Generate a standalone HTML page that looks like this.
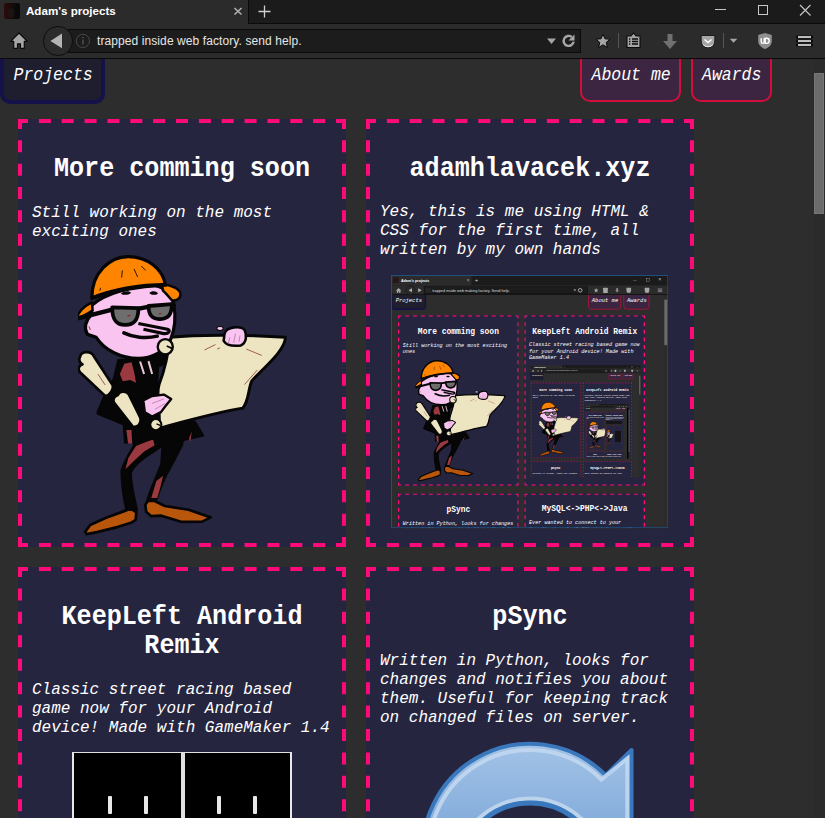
<!DOCTYPE html>
<html><head><meta charset="utf-8"><title>Adam's projects</title><style>
*{box-sizing:border-box}
html,body{margin:0;padding:0}
body{width:825px;height:818px;overflow:hidden;position:relative;background:#2d2d2d;font-family:"Liberation Sans",sans-serif}
.abs{position:absolute}
.tabstrip{position:absolute;left:0;top:0;width:825px;height:24px;background:#1b1b1b;border-bottom:1px solid #0a0a0a}
.seltab{position:absolute;left:0;top:0;width:249px;height:29px;background:#2b2b2b;border-right:1px solid #0a0a0a}
.toolbar{position:absolute;left:0;top:24px;width:825px;height:35px;background:#2b2b2b;border-bottom:1px solid #0a0a0a}
.page{position:absolute;left:0;top:58px;width:813px;height:760px;overflow:hidden;background:#2d2d2d}
.card{position:absolute;background:#262540}
.card .db{position:absolute;left:0;top:0}
.h2{position:absolute;left:0;width:100%;text-align:center;font-family:"Liberation Mono",monospace;font-weight:bold;font-size:25.1px;line-height:29px;color:#fff;white-space:pre;transform:scaleY(1.075);transform-origin:50% 21.2px}
.p{position:absolute;font-family:"Liberation Mono",monospace;font-style:italic;font-size:16px;line-height:19px;color:#fff;white-space:pre;transform:scaleY(1.06);transform-origin:0 13.76px}
.btn{position:absolute;font-family:"Liberation Mono",monospace;font-style:italic;font-size:16.5px;line-height:19px;color:#fff;white-space:pre;transform:scaleY(1.08);transform-origin:0 13.9px}

.win{position:absolute;transform-origin:0 0;overflow:hidden;background:#2d2d2d}
.win .abs{position:absolute}
.win .h2{font-size:23.9px}
.win .p{font-size:15.4px}
</style></head>
<body><svg width="0" height="0" style="position:absolute"><defs><g id="cartoon"><g transform="translate(80 430) scale(0.169693)"><path d="M300 40 L480 40 L480 95 L430 130 C380 160 320 200 300 250 C295 300 315 380 335 470 L275 480 C262 420 245 320 245 240 C255 200 270 170 320 90 Z" fill="#060606" stroke="#060606" stroke-width="14" stroke-linejoin="round"/><path d="M490 40 L610 40 L600 90 C570 150 540 210 510 260 C480 320 460 380 450 410 L395 420 C410 360 450 280 480 200 Z" fill="#060606" stroke="#060606" stroke-width="14" stroke-linejoin="round"/><path d="M330 95 L430 55 L440 90 L380 125 L320 180 L268 232 L285 165 Z" fill="#9a3a40"/><path d="M420 400 L450 300 L490 270 L470 350 L455 400 Z" fill="#9a3a40"/><path d="M30 600 L60 560 L150 518 L260 478 L300 463 L332 485 L328 530 L300 547 L220 572 L100 602 L40 614 Z" fill="#b8560c" stroke="#060606" stroke-width="16" stroke-linejoin="round"/><path d="M385 440 L400 418 L440 418 L500 448 L640 470 L770 515 L720 540 L600 542 L480 505 L420 508 L390 482 Z" fill="#b8560c" stroke="#060606" stroke-width="16" stroke-linejoin="round"/></g><g transform="translate(90 395) scale(0.145455)"><path d="M50 120 L230 200 L240 330 L450 300 L600 320 L780 280 L720 180 L480 230 L400 0 L100 0 Z" fill="#060606" stroke="#060606" stroke-width="12" stroke-linejoin="round"/><path d="M250 240 L285 240 L290 334 L262 334 Z" fill="#9a3a40"/><path d="M680 300 L700 250 L690 320 Z" fill="#9a3a40"/></g><g transform="translate(70 330) scale(0.146692)"><path d="M330 205 L560 190 L680 120 L700 200 L600 250 L590 420 L690 470 L640 600 L560 660 L360 640 L190 570 L240 450 L300 330 Z" fill="#060606" stroke="#060606" stroke-width="16" stroke-linejoin="round"/><path d="M370 230 L420 220 L440 300 L450 360 L410 340 L360 350 L340 300 Z" fill="#9a3a40"/><path d="M478 215 L505 300 M535 212 L560 300" stroke="#e8c6d2" stroke-width="14"/><path d="M70 180 C75 145 140 140 160 175 L290 375 C300 400 270 450 240 450 L70 290 C50 270 60 240 85 235 C60 220 60 195 70 180 Z" fill="#ede4c2" stroke="#060606" stroke-width="18" stroke-linejoin="round"/><path d="M190 300 L240 375" stroke="#8a2a2a" stroke-width="5"/><path d="M325 445 C335 418 378 410 400 438 L480 600 C490 640 460 668 428 658 L300 495 C288 470 305 450 325 445 Z" fill="#ede4c2" stroke="#060606" stroke-width="18" stroke-linejoin="round"/></g><g transform="translate(150 310) scale(0.181818)"><path d="M110 150 C300 130 600 140 745 150 C740 230 620 320 560 390 C540 430 545 500 510 540 C380 560 200 610 50 650 C60 560 30 470 50 410 C80 330 100 250 110 150 Z" fill="#ede4c2" stroke="#060606" stroke-width="16" stroke-linejoin="round"/><path d="M300 220 L360 190 M370 215 L385 208 M530 215 L615 250 M520 410 L590 330" stroke="#8a2a2a" stroke-width="4"/><path d="M410 130 C420 90 500 85 520 110 C535 140 530 180 500 195 C460 200 420 195 405 170 Z" fill="#f9c4ef" stroke="#060606" stroke-width="14" stroke-linejoin="round"/><ellipse cx="385" cy="102" rx="18" ry="11" fill="#f9c4ef" stroke="#060606" stroke-width="6"/><path d="M440 150 L430 185 M470 130 L460 180 M495 140 L490 175" stroke="#c080b0" stroke-width="5"/></g><g transform="translate(70 330) scale(0.146692)"><path d="M500 480 L560 450 L640 440 L690 470 L650 520 L620 560 L560 590 L510 560 Z" fill="#f9c4ef" stroke="#060606" stroke-width="16" stroke-linejoin="round"/><path d="M560 500 L640 470 M580 540 L650 500" stroke="#c080b0" stroke-width="6"/><circle cx="585" cy="645" r="38" fill="#ede4c2" stroke="#060606" stroke-width="14"/><path d="M590 640 L615 650" stroke="#060606" stroke-width="10"/></g><g transform="translate(70 250) scale(0.145455)"><path d="M150 380 C250 290 450 250 560 240 C650 250 700 300 715 380 C730 470 715 560 690 620 C650 700 560 745 470 745 C350 745 240 690 180 600 L120 580 C95 540 105 490 150 440 Z" fill="#f9c4ef" stroke="#060606" stroke-width="22" stroke-linejoin="round"/><circle cx="655" cy="665" r="52" fill="#ede4c2" stroke="#060606" stroke-width="16"/><path d="M665 660 L705 678" stroke="#060606" stroke-width="12"/><path d="M150 330 C150 150 280 45 400 45 C530 45 640 130 655 240 C500 250 300 280 150 330 Z" fill="#ff8500" stroke="#060606" stroke-width="22" stroke-linejoin="round"/><path d="M630 235 C700 240 760 270 760 305 C760 340 720 352 700 345 C680 325 660 295 640 280 Z" fill="#ff8500" stroke="#060606" stroke-width="18" stroke-linejoin="round"/><path d="M150 360 C110 380 60 420 48 465 C85 465 120 435 155 415 Z" fill="#ff8500" stroke="#060606" stroke-width="16" stroke-linejoin="round"/><path d="M140 335 C300 270 500 240 665 240" fill="none" stroke="#060606" stroke-width="26"/><path d="M360 140 L355 190 M440 130 L465 185 M490 110 L520 140 M210 260 L205 280" stroke="#060606" stroke-width="6"/><path d="M350 300 C370 280 410 280 420 295 C400 312 365 312 350 300 Z M545 295 C560 280 595 280 605 300 C585 312 560 312 545 295 Z" fill="#060606"/><path d="M55 470 L290 410 M465 405 L545 390 M695 375 L725 368" stroke="#060606" stroke-width="30"/><path d="M290 395 L470 400 C470 470 450 515 380 515 C310 515 290 470 290 395 Z" fill="#6e6e6e" stroke="#060606" stroke-width="26" stroke-linejoin="round"/><path d="M540 385 L700 372 C700 440 680 472 620 475 C560 478 540 440 540 385 Z" fill="#6e6e6e" stroke="#060606" stroke-width="26" stroke-linejoin="round"/><path d="M395 455 L415 448 M610 440 L630 434" stroke="#8a2020" stroke-width="7"/><path d="M470 505 L670 545 C695 552 680 578 645 575 L505 545" fill="#f9c4ef" stroke="#060606" stroke-width="22" stroke-linejoin="round"/><path d="M370 570 C430 600 520 612 600 592" fill="none" stroke="#060606" stroke-width="24" stroke-linecap="round"/><path d="M130 525 L140 550" stroke="#8a2020" stroke-width="6"/></g></g></defs></svg>
<div class="page"><div class="abs" style="left:0;top:-30px;width:105px;height:76px;background:#1e1e2e;border:4px solid #15124a;border-radius:10px"></div><div class="btn" style="left:13.5px;top:7.74px">Projects</div><div class="abs" style="left:580px;top:-30px;width:101px;height:74px;background:#3b2541;border:2px solid #d10f3c;border-radius:10px"></div><div class="btn" style="left:591.5px;top:7.74px">About me</div><div class="abs" style="left:691px;top:-30px;width:81px;height:74px;background:#3b2541;border:2px solid #d10f3c;border-radius:10px"></div><div class="btn" style="left:702px;top:7.74px">Awards</div><div class="card" style="left:18px;top:61px;width:328px;height:428px"><svg class="db" width="328" height="428" viewBox="0 0 328 428"><path fill="#ff0a78" d="M0.00 0.00h10.00v4.00h-10.00zM0.00 424.00h10.00v4.00h-10.00zM20.86 0.00h12.00v4.00h-12.00zM20.86 424.00h12.00v4.00h-12.00zM43.71 0.00h12.00v4.00h-12.00zM43.71 424.00h12.00v4.00h-12.00zM66.57 0.00h12.00v4.00h-12.00zM66.57 424.00h12.00v4.00h-12.00zM89.43 0.00h12.00v4.00h-12.00zM89.43 424.00h12.00v4.00h-12.00zM112.29 0.00h12.00v4.00h-12.00zM112.29 424.00h12.00v4.00h-12.00zM135.14 0.00h12.00v4.00h-12.00zM135.14 424.00h12.00v4.00h-12.00zM158.00 0.00h12.00v4.00h-12.00zM158.00 424.00h12.00v4.00h-12.00zM180.86 0.00h12.00v4.00h-12.00zM180.86 424.00h12.00v4.00h-12.00zM203.71 0.00h12.00v4.00h-12.00zM203.71 424.00h12.00v4.00h-12.00zM226.57 0.00h12.00v4.00h-12.00zM226.57 424.00h12.00v4.00h-12.00zM249.43 0.00h12.00v4.00h-12.00zM249.43 424.00h12.00v4.00h-12.00zM272.29 0.00h12.00v4.00h-12.00zM272.29 424.00h12.00v4.00h-12.00zM295.14 0.00h12.00v4.00h-12.00zM295.14 424.00h12.00v4.00h-12.00zM318.00 0.00h10.00v4.00h-10.00zM318.00 424.00h10.00v4.00h-10.00zM0.00 0.00h4.00v10.00h-4.00zM324.00 0.00h4.00v10.00h-4.00zM0.00 21.33h4.00v12.00h-4.00zM324.00 21.33h4.00v12.00h-4.00zM0.00 44.67h4.00v12.00h-4.00zM324.00 44.67h4.00v12.00h-4.00zM0.00 68.00h4.00v12.00h-4.00zM324.00 68.00h4.00v12.00h-4.00zM0.00 91.33h4.00v12.00h-4.00zM324.00 91.33h4.00v12.00h-4.00zM0.00 114.67h4.00v12.00h-4.00zM324.00 114.67h4.00v12.00h-4.00zM0.00 138.00h4.00v12.00h-4.00zM324.00 138.00h4.00v12.00h-4.00zM0.00 161.33h4.00v12.00h-4.00zM324.00 161.33h4.00v12.00h-4.00zM0.00 184.67h4.00v12.00h-4.00zM324.00 184.67h4.00v12.00h-4.00zM0.00 208.00h4.00v12.00h-4.00zM324.00 208.00h4.00v12.00h-4.00zM0.00 231.33h4.00v12.00h-4.00zM324.00 231.33h4.00v12.00h-4.00zM0.00 254.67h4.00v12.00h-4.00zM324.00 254.67h4.00v12.00h-4.00zM0.00 278.00h4.00v12.00h-4.00zM324.00 278.00h4.00v12.00h-4.00zM0.00 301.33h4.00v12.00h-4.00zM324.00 301.33h4.00v12.00h-4.00zM0.00 324.67h4.00v12.00h-4.00zM324.00 324.67h4.00v12.00h-4.00zM0.00 348.00h4.00v12.00h-4.00zM324.00 348.00h4.00v12.00h-4.00zM0.00 371.33h4.00v12.00h-4.00zM324.00 371.33h4.00v12.00h-4.00zM0.00 394.67h4.00v12.00h-4.00zM324.00 394.67h4.00v12.00h-4.00zM0.00 418.00h4.00v10.00h-4.00zM324.00 418.00h4.00v10.00h-4.00z"/></svg><div class="h2" style="top:36.22px">More comming soon</div><div class="p" style="top:85.04px;left:14px">Still working on the most</div><div class="p" style="top:104.04px;left:14px">exciting ones</div><svg class="abs" style="left:60px;top:136px" width="212" height="282" viewBox="78 255 212 282"><use href="#cartoon"/></svg></div><div class="card" style="left:366px;top:61px;width:328px;height:428px"><svg class="db" width="328" height="428" viewBox="0 0 328 428"><path fill="#ff0a78" d="M0.00 0.00h10.00v4.00h-10.00zM0.00 424.00h10.00v4.00h-10.00zM20.86 0.00h12.00v4.00h-12.00zM20.86 424.00h12.00v4.00h-12.00zM43.71 0.00h12.00v4.00h-12.00zM43.71 424.00h12.00v4.00h-12.00zM66.57 0.00h12.00v4.00h-12.00zM66.57 424.00h12.00v4.00h-12.00zM89.43 0.00h12.00v4.00h-12.00zM89.43 424.00h12.00v4.00h-12.00zM112.29 0.00h12.00v4.00h-12.00zM112.29 424.00h12.00v4.00h-12.00zM135.14 0.00h12.00v4.00h-12.00zM135.14 424.00h12.00v4.00h-12.00zM158.00 0.00h12.00v4.00h-12.00zM158.00 424.00h12.00v4.00h-12.00zM180.86 0.00h12.00v4.00h-12.00zM180.86 424.00h12.00v4.00h-12.00zM203.71 0.00h12.00v4.00h-12.00zM203.71 424.00h12.00v4.00h-12.00zM226.57 0.00h12.00v4.00h-12.00zM226.57 424.00h12.00v4.00h-12.00zM249.43 0.00h12.00v4.00h-12.00zM249.43 424.00h12.00v4.00h-12.00zM272.29 0.00h12.00v4.00h-12.00zM272.29 424.00h12.00v4.00h-12.00zM295.14 0.00h12.00v4.00h-12.00zM295.14 424.00h12.00v4.00h-12.00zM318.00 0.00h10.00v4.00h-10.00zM318.00 424.00h10.00v4.00h-10.00zM0.00 0.00h4.00v10.00h-4.00zM324.00 0.00h4.00v10.00h-4.00zM0.00 21.33h4.00v12.00h-4.00zM324.00 21.33h4.00v12.00h-4.00zM0.00 44.67h4.00v12.00h-4.00zM324.00 44.67h4.00v12.00h-4.00zM0.00 68.00h4.00v12.00h-4.00zM324.00 68.00h4.00v12.00h-4.00zM0.00 91.33h4.00v12.00h-4.00zM324.00 91.33h4.00v12.00h-4.00zM0.00 114.67h4.00v12.00h-4.00zM324.00 114.67h4.00v12.00h-4.00zM0.00 138.00h4.00v12.00h-4.00zM324.00 138.00h4.00v12.00h-4.00zM0.00 161.33h4.00v12.00h-4.00zM324.00 161.33h4.00v12.00h-4.00zM0.00 184.67h4.00v12.00h-4.00zM324.00 184.67h4.00v12.00h-4.00zM0.00 208.00h4.00v12.00h-4.00zM324.00 208.00h4.00v12.00h-4.00zM0.00 231.33h4.00v12.00h-4.00zM324.00 231.33h4.00v12.00h-4.00zM0.00 254.67h4.00v12.00h-4.00zM324.00 254.67h4.00v12.00h-4.00zM0.00 278.00h4.00v12.00h-4.00zM324.00 278.00h4.00v12.00h-4.00zM0.00 301.33h4.00v12.00h-4.00zM324.00 301.33h4.00v12.00h-4.00zM0.00 324.67h4.00v12.00h-4.00zM324.00 324.67h4.00v12.00h-4.00zM0.00 348.00h4.00v12.00h-4.00zM324.00 348.00h4.00v12.00h-4.00zM0.00 371.33h4.00v12.00h-4.00zM324.00 371.33h4.00v12.00h-4.00zM0.00 394.67h4.00v12.00h-4.00zM324.00 394.67h4.00v12.00h-4.00zM0.00 418.00h4.00v10.00h-4.00zM324.00 418.00h4.00v10.00h-4.00z"/></svg><div class="h2" style="top:36.22px">adamhlavacek.xyz</div><div class="p" style="top:84.34px;left:14px">Yes, this is me using HTML &</div><div class="p" style="top:103.34px;left:14px">CSS for the first time, all</div><div class="p" style="top:122.34px;left:14px">written by my own hands</div></div><div class="card" style="left:18px;top:509px;width:328px;height:500px"><svg class="db" width="328" height="500" viewBox="0 0 328 500"><path fill="#ff0a78" d="M0.00 0.00h10.00v4.00h-10.00zM0.00 496.00h10.00v4.00h-10.00zM20.86 0.00h12.00v4.00h-12.00zM20.86 496.00h12.00v4.00h-12.00zM43.71 0.00h12.00v4.00h-12.00zM43.71 496.00h12.00v4.00h-12.00zM66.57 0.00h12.00v4.00h-12.00zM66.57 496.00h12.00v4.00h-12.00zM89.43 0.00h12.00v4.00h-12.00zM89.43 496.00h12.00v4.00h-12.00zM112.29 0.00h12.00v4.00h-12.00zM112.29 496.00h12.00v4.00h-12.00zM135.14 0.00h12.00v4.00h-12.00zM135.14 496.00h12.00v4.00h-12.00zM158.00 0.00h12.00v4.00h-12.00zM158.00 496.00h12.00v4.00h-12.00zM180.86 0.00h12.00v4.00h-12.00zM180.86 496.00h12.00v4.00h-12.00zM203.71 0.00h12.00v4.00h-12.00zM203.71 496.00h12.00v4.00h-12.00zM226.57 0.00h12.00v4.00h-12.00zM226.57 496.00h12.00v4.00h-12.00zM249.43 0.00h12.00v4.00h-12.00zM249.43 496.00h12.00v4.00h-12.00zM272.29 0.00h12.00v4.00h-12.00zM272.29 496.00h12.00v4.00h-12.00zM295.14 0.00h12.00v4.00h-12.00zM295.14 496.00h12.00v4.00h-12.00zM318.00 0.00h10.00v4.00h-10.00zM318.00 496.00h10.00v4.00h-10.00zM0.00 0.00h4.00v10.00h-4.00zM324.00 0.00h4.00v10.00h-4.00zM0.00 21.43h4.00v12.00h-4.00zM324.00 21.43h4.00v12.00h-4.00zM0.00 44.86h4.00v12.00h-4.00zM324.00 44.86h4.00v12.00h-4.00zM0.00 68.29h4.00v12.00h-4.00zM324.00 68.29h4.00v12.00h-4.00zM0.00 91.71h4.00v12.00h-4.00zM324.00 91.71h4.00v12.00h-4.00zM0.00 115.14h4.00v12.00h-4.00zM324.00 115.14h4.00v12.00h-4.00zM0.00 138.57h4.00v12.00h-4.00zM324.00 138.57h4.00v12.00h-4.00zM0.00 162.00h4.00v12.00h-4.00zM324.00 162.00h4.00v12.00h-4.00zM0.00 185.43h4.00v12.00h-4.00zM324.00 185.43h4.00v12.00h-4.00zM0.00 208.86h4.00v12.00h-4.00zM324.00 208.86h4.00v12.00h-4.00zM0.00 232.29h4.00v12.00h-4.00zM324.00 232.29h4.00v12.00h-4.00zM0.00 255.71h4.00v12.00h-4.00zM324.00 255.71h4.00v12.00h-4.00zM0.00 279.14h4.00v12.00h-4.00zM324.00 279.14h4.00v12.00h-4.00zM0.00 302.57h4.00v12.00h-4.00zM324.00 302.57h4.00v12.00h-4.00zM0.00 326.00h4.00v12.00h-4.00zM324.00 326.00h4.00v12.00h-4.00zM0.00 349.43h4.00v12.00h-4.00zM324.00 349.43h4.00v12.00h-4.00zM0.00 372.86h4.00v12.00h-4.00zM324.00 372.86h4.00v12.00h-4.00zM0.00 396.29h4.00v12.00h-4.00zM324.00 396.29h4.00v12.00h-4.00zM0.00 419.71h4.00v12.00h-4.00zM324.00 419.71h4.00v12.00h-4.00zM0.00 443.14h4.00v12.00h-4.00zM324.00 443.14h4.00v12.00h-4.00zM0.00 466.57h4.00v12.00h-4.00zM324.00 466.57h4.00v12.00h-4.00zM0.00 490.00h4.00v10.00h-4.00zM324.00 490.00h4.00v10.00h-4.00z"/></svg><div class="h2" style="top:35.62px">KeepLeft Android</div><div class="h2" style="top:64.62px">Remix</div><div class="p" style="top:113.54px;left:14px">Classic street racing based</div><div class="p" style="top:132.54px;left:14px">game now for your Android</div><div class="p" style="top:151.54px;left:14px">device! Made with GameMaker 1.4</div><div class="abs" style="left:54px;top:185px;width:220px;height:120px;background:#000;border-left:2.5px solid #e8e8e8;border-top:1.5px solid #e0e0e0;border-right:2px solid #e8e8e8"></div><div class="abs" style="left:163px;top:185px;width:3.5px;height:120px;background:#e0e0e0"></div><div class="abs" style="left:89.5px;top:228.7px;width:4px;height:18.5px;background:#e8e8e8;border-radius:1px"></div><div class="abs" style="left:126.0px;top:228.7px;width:4px;height:18.5px;background:#e8e8e8;border-radius:1px"></div><div class="abs" style="left:198.5px;top:228.7px;width:4px;height:18.5px;background:#e8e8e8;border-radius:1px"></div><div class="abs" style="left:235.2px;top:228.7px;width:4px;height:18.5px;background:#e8e8e8;border-radius:1px"></div></div><div class="card" style="left:366px;top:509px;width:328px;height:500px"><svg class="db" width="328" height="500" viewBox="0 0 328 500"><path fill="#ff0a78" d="M0.00 0.00h10.00v4.00h-10.00zM0.00 496.00h10.00v4.00h-10.00zM20.86 0.00h12.00v4.00h-12.00zM20.86 496.00h12.00v4.00h-12.00zM43.71 0.00h12.00v4.00h-12.00zM43.71 496.00h12.00v4.00h-12.00zM66.57 0.00h12.00v4.00h-12.00zM66.57 496.00h12.00v4.00h-12.00zM89.43 0.00h12.00v4.00h-12.00zM89.43 496.00h12.00v4.00h-12.00zM112.29 0.00h12.00v4.00h-12.00zM112.29 496.00h12.00v4.00h-12.00zM135.14 0.00h12.00v4.00h-12.00zM135.14 496.00h12.00v4.00h-12.00zM158.00 0.00h12.00v4.00h-12.00zM158.00 496.00h12.00v4.00h-12.00zM180.86 0.00h12.00v4.00h-12.00zM180.86 496.00h12.00v4.00h-12.00zM203.71 0.00h12.00v4.00h-12.00zM203.71 496.00h12.00v4.00h-12.00zM226.57 0.00h12.00v4.00h-12.00zM226.57 496.00h12.00v4.00h-12.00zM249.43 0.00h12.00v4.00h-12.00zM249.43 496.00h12.00v4.00h-12.00zM272.29 0.00h12.00v4.00h-12.00zM272.29 496.00h12.00v4.00h-12.00zM295.14 0.00h12.00v4.00h-12.00zM295.14 496.00h12.00v4.00h-12.00zM318.00 0.00h10.00v4.00h-10.00zM318.00 496.00h10.00v4.00h-10.00zM0.00 0.00h4.00v10.00h-4.00zM324.00 0.00h4.00v10.00h-4.00zM0.00 21.43h4.00v12.00h-4.00zM324.00 21.43h4.00v12.00h-4.00zM0.00 44.86h4.00v12.00h-4.00zM324.00 44.86h4.00v12.00h-4.00zM0.00 68.29h4.00v12.00h-4.00zM324.00 68.29h4.00v12.00h-4.00zM0.00 91.71h4.00v12.00h-4.00zM324.00 91.71h4.00v12.00h-4.00zM0.00 115.14h4.00v12.00h-4.00zM324.00 115.14h4.00v12.00h-4.00zM0.00 138.57h4.00v12.00h-4.00zM324.00 138.57h4.00v12.00h-4.00zM0.00 162.00h4.00v12.00h-4.00zM324.00 162.00h4.00v12.00h-4.00zM0.00 185.43h4.00v12.00h-4.00zM324.00 185.43h4.00v12.00h-4.00zM0.00 208.86h4.00v12.00h-4.00zM324.00 208.86h4.00v12.00h-4.00zM0.00 232.29h4.00v12.00h-4.00zM324.00 232.29h4.00v12.00h-4.00zM0.00 255.71h4.00v12.00h-4.00zM324.00 255.71h4.00v12.00h-4.00zM0.00 279.14h4.00v12.00h-4.00zM324.00 279.14h4.00v12.00h-4.00zM0.00 302.57h4.00v12.00h-4.00zM324.00 302.57h4.00v12.00h-4.00zM0.00 326.00h4.00v12.00h-4.00zM324.00 326.00h4.00v12.00h-4.00zM0.00 349.43h4.00v12.00h-4.00zM324.00 349.43h4.00v12.00h-4.00zM0.00 372.86h4.00v12.00h-4.00zM324.00 372.86h4.00v12.00h-4.00zM0.00 396.29h4.00v12.00h-4.00zM324.00 396.29h4.00v12.00h-4.00zM0.00 419.71h4.00v12.00h-4.00zM324.00 419.71h4.00v12.00h-4.00zM0.00 443.14h4.00v12.00h-4.00zM324.00 443.14h4.00v12.00h-4.00zM0.00 466.57h4.00v12.00h-4.00zM324.00 466.57h4.00v12.00h-4.00zM0.00 490.00h4.00v10.00h-4.00zM324.00 490.00h4.00v10.00h-4.00z"/></svg><svg class="abs" style="left:0;top:0" width="328" height="500" viewBox="366 567 328 500"><defs><linearGradient id="pg" x1="0" y1="0" x2="0" y2="1"><stop offset="0" stop-color="#a3c3e7"/><stop offset="1" stop-color="#6f9dd3"/></linearGradient><clipPath id="pc"><path d="M426.9 880A107 107 0 0 1 605.7 775.3L631.5 750V880Z"/></clipPath></defs><path d="M426.9 880A107 107 0 0 1 605.7 775.3L631.5 750V880Z" fill="url(#pg)" stroke="#3a78be" stroke-width="4" stroke-linejoin="round"/><path d="M433.2 880A101 101 0 0 1 601.4 779.6L627.3 758.5V880" fill="none" stroke="#c2d7ef" stroke-width="4" opacity="0.9"/><circle cx="530" cy="874" r="75.5" fill="none" stroke="#bcd3ec" stroke-width="4"/><circle cx="530" cy="874" r="71" fill="#262540" stroke="#3a78be" stroke-width="5"/></svg><div class="h2" style="top:35.62px">pSync</div><div class="p" style="top:84.54px;left:14px">Written in Python, looks for</div><div class="p" style="top:103.54px;left:14px">changes and notifies you about</div><div class="p" style="top:122.54px;left:14px">them. Useful for keeping track</div><div class="p" style="top:141.54px;left:14px">on changed files on server.</div></div></div>
<div class="win" style="left:391px;top:275px;width:834px;height:762px;transform:scale(0.3325)"><div class="abs" style="left:0;top:0;width:834px;height:32px;background:#1b1b1b"></div><div class="abs" style="left:0;top:0;width:242px;height:32px;background:#2b2b2b"></div><div class="abs" style="left:0;top:32px;width:834px;height:28px;background:#2b2b2b;border-bottom:2px solid #0a0a0a"></div><div class="abs" style="left:6px;top:7px;width:17px;height:17px;background:#2a1618"></div><div class="abs" style="left:30px;top:8px;font:bold 11px/16px 'Liberation Sans',sans-serif;color:#fff;white-space:pre">Adam's projects</div><div class="abs" style="left:228px;top:8px;font:14px/16px 'Liberation Sans',sans-serif;color:#aaa">&#215;</div><div class="abs" style="left:252px;top:6px;font:18px/18px 'Liberation Sans',sans-serif;color:#ccc">+</div><div class="abs" style="left:728px;top:15px;width:11px;height:1px;background:#aaa"></div><div class="abs" style="left:767px;top:10px;width:10px;height:10px;border:1px solid #bbb"></div><div class="abs" style="left:804px;top:6px;font:16px/16px 'Liberation Sans',sans-serif;color:#bbb">&#215;</div><div class="abs" style="left:99px;top:35.0px;width:493px;height:22px;background:#1c1c1c;border:1px solid #0a0a0a"></div><svg class="abs" style="left:13px;top:37.0px" width="20" height="19" viewBox="0 0 20 19"><path d="M10 2L18.3 10.3H15.3V17.3H11.5V12.8H8.5V17.3H4.7V10.3H1.7Z" fill="#a6a6a6"/></svg><div class="abs" style="left:45px;top:32.0px;width:28px;height:28px;border-radius:50%;background:#2b2b2b;border:1.5px solid #0d0d0d"></div><svg class="abs" style="left:50px;top:37.0px" width="18" height="18" viewBox="0 0 18 18"><path d="M3 9L13 3V15Z" fill="#b4b4b4"/></svg><svg class="abs" style="left:78px;top:37.0px" width="18" height="18" viewBox="0 0 18 18"><path d="M14 9L4 3V15Z" fill="#b4b4b4"/></svg><div class="abs" style="left:104px;top:38.0px;width:16px;height:16px;background:#262626"></div><div class="abs" style="left:124px;top:38.0px;font:11.4px/16px 'Liberation Sans',sans-serif;color:#ddd;white-space:pre">trapped inside web making factory. Send help.</div><svg class="abs" style="left:548px;top:43.0px" width="10" height="6" viewBox="0 0 10 6"><path d="M0 0H10L5 6Z" fill="#a6a6a6"/></svg><div class="abs" style="left:562px;top:39.0px;width:14px;height:14px;border-radius:50%;border:3px solid #a6a6a6"></div><svg class="abs" style="left:609px;top:38.0px" width="16" height="16" viewBox="0 0 16 16"><path d="M8 1.2L10 5.8L15 6.2L11.2 9.5L12.4 14.5L8 11.8L3.6 14.5L4.8 9.5L1 6.2L6 5.8Z" fill="#a6a6a6"/></svg><div class="abs" style="left:638px;top:38.0px;width:14px;height:16px;background:#a6a6a6;border-radius:2px"></div><svg class="abs" style="left:672px;top:38.0px" width="16" height="16" viewBox="0 0 16 16"><path d="M5.5 1H10.5V8H14L8 15L2 8H5.5Z" fill="#8a8a8a"/></svg><div class="abs" style="left:708px;top:38.0px;width:14px;height:16px;background:#a6a6a6;border-radius:0 0 7px 7px"></div><div class="abs" style="left:763px;top:38.0px;width:14px;height:16px;background:#a6a6a6;border-radius:0 0 7px 7px"></div><svg class="abs" style="left:801px;top:39.0px" width="16" height="14" viewBox="0 0 16 14"><path d="M1 3H15M1 7H15M1 11H15" stroke="#aaa" stroke-width="2"/></svg><div class="abs" style="left:0;top:60px;width:834px;height:702px;overflow:hidden"><div class="abs" style="left:0;top:-30px;width:105.6px;height:75.3px;background:#1e1e2e;border:4px solid #15124a;border-radius:10px"></div><div class="btn" style="left:14px;top:7.5px">Projects</div><div class="abs" style="left:593px;top:-30px;width:98.7px;height:73.8px;background:#3b2541;border:2px solid #d10f3c;border-radius:10px"></div><div class="btn" style="left:604.0px;top:8.0px">About me</div><div class="abs" style="left:698.6px;top:-30px;width:78.8px;height:73.8px;background:#3b2541;border:2px solid #d10f3c;border-radius:10px"></div><div class="btn" style="left:709.6px;top:8.0px">Awards</div><div class="card" style="left:21.4px;top:61.0px;width:362.6px;height:513.0px"><svg class="db" width="363" height="513" viewBox="0 0 363 513"><path fill="#ff0a78" d="M0.00 0.00h10.00v4.00h-10.00zM0.00 509.00h10.00v4.00h-10.00zM21.67 0.00h12.00v4.00h-12.00zM21.67 509.00h12.00v4.00h-12.00zM45.33 0.00h12.00v4.00h-12.00zM45.33 509.00h12.00v4.00h-12.00zM69.00 0.00h12.00v4.00h-12.00zM69.00 509.00h12.00v4.00h-12.00zM92.67 0.00h12.00v4.00h-12.00zM92.67 509.00h12.00v4.00h-12.00zM116.33 0.00h12.00v4.00h-12.00zM116.33 509.00h12.00v4.00h-12.00zM140.00 0.00h12.00v4.00h-12.00zM140.00 509.00h12.00v4.00h-12.00zM163.67 0.00h12.00v4.00h-12.00zM163.67 509.00h12.00v4.00h-12.00zM187.33 0.00h12.00v4.00h-12.00zM187.33 509.00h12.00v4.00h-12.00zM211.00 0.00h12.00v4.00h-12.00zM211.00 509.00h12.00v4.00h-12.00zM234.67 0.00h12.00v4.00h-12.00zM234.67 509.00h12.00v4.00h-12.00zM258.33 0.00h12.00v4.00h-12.00zM258.33 509.00h12.00v4.00h-12.00zM282.00 0.00h12.00v4.00h-12.00zM282.00 509.00h12.00v4.00h-12.00zM305.67 0.00h12.00v4.00h-12.00zM305.67 509.00h12.00v4.00h-12.00zM329.33 0.00h12.00v4.00h-12.00zM329.33 509.00h12.00v4.00h-12.00zM353.00 0.00h10.00v4.00h-10.00zM353.00 509.00h10.00v4.00h-10.00zM0.00 0.00h4.00v10.00h-4.00zM359.00 0.00h4.00v10.00h-4.00zM0.00 20.95h4.00v12.00h-4.00zM359.00 20.95h4.00v12.00h-4.00zM0.00 43.91h4.00v12.00h-4.00zM359.00 43.91h4.00v12.00h-4.00zM0.00 66.86h4.00v12.00h-4.00zM359.00 66.86h4.00v12.00h-4.00zM0.00 89.82h4.00v12.00h-4.00zM359.00 89.82h4.00v12.00h-4.00zM0.00 112.77h4.00v12.00h-4.00zM359.00 112.77h4.00v12.00h-4.00zM0.00 135.73h4.00v12.00h-4.00zM359.00 135.73h4.00v12.00h-4.00zM0.00 158.68h4.00v12.00h-4.00zM359.00 158.68h4.00v12.00h-4.00zM0.00 181.64h4.00v12.00h-4.00zM359.00 181.64h4.00v12.00h-4.00zM0.00 204.59h4.00v12.00h-4.00zM359.00 204.59h4.00v12.00h-4.00zM0.00 227.55h4.00v12.00h-4.00zM359.00 227.55h4.00v12.00h-4.00zM0.00 250.50h4.00v12.00h-4.00zM359.00 250.50h4.00v12.00h-4.00zM0.00 273.45h4.00v12.00h-4.00zM359.00 273.45h4.00v12.00h-4.00zM0.00 296.41h4.00v12.00h-4.00zM359.00 296.41h4.00v12.00h-4.00zM0.00 319.36h4.00v12.00h-4.00zM359.00 319.36h4.00v12.00h-4.00zM0.00 342.32h4.00v12.00h-4.00zM359.00 342.32h4.00v12.00h-4.00zM0.00 365.27h4.00v12.00h-4.00zM359.00 365.27h4.00v12.00h-4.00zM0.00 388.23h4.00v12.00h-4.00zM359.00 388.23h4.00v12.00h-4.00zM0.00 411.18h4.00v12.00h-4.00zM359.00 411.18h4.00v12.00h-4.00zM0.00 434.14h4.00v12.00h-4.00zM359.00 434.14h4.00v12.00h-4.00zM0.00 457.09h4.00v12.00h-4.00zM359.00 457.09h4.00v12.00h-4.00zM0.00 480.05h4.00v12.00h-4.00zM359.00 480.05h4.00v12.00h-4.00zM0.00 503.00h4.00v10.00h-4.00zM359.00 503.00h4.00v10.00h-4.00z"/></svg><div class="h2" style="top:36.23px">More comming soon</div><div class="p" style="top:82.64px;left:14px">Still working on the most exciting</div><div class="p" style="top:101.64px;left:14px">ones</div><svg class="abs" style="left:51.4px;top:134.6px" width="275.6" height="366.6" viewBox="78 255 212 282"><use href="#cartoon"/></svg></div><div class="card" style="left:401.2px;top:61.0px;width:362.8px;height:513.0px"><svg class="db" width="363" height="513" viewBox="0 0 363 513"><path fill="#ff0a78" d="M0.00 0.00h10.00v4.00h-10.00zM0.00 509.00h10.00v4.00h-10.00zM21.67 0.00h12.00v4.00h-12.00zM21.67 509.00h12.00v4.00h-12.00zM45.33 0.00h12.00v4.00h-12.00zM45.33 509.00h12.00v4.00h-12.00zM69.00 0.00h12.00v4.00h-12.00zM69.00 509.00h12.00v4.00h-12.00zM92.67 0.00h12.00v4.00h-12.00zM92.67 509.00h12.00v4.00h-12.00zM116.33 0.00h12.00v4.00h-12.00zM116.33 509.00h12.00v4.00h-12.00zM140.00 0.00h12.00v4.00h-12.00zM140.00 509.00h12.00v4.00h-12.00zM163.67 0.00h12.00v4.00h-12.00zM163.67 509.00h12.00v4.00h-12.00zM187.33 0.00h12.00v4.00h-12.00zM187.33 509.00h12.00v4.00h-12.00zM211.00 0.00h12.00v4.00h-12.00zM211.00 509.00h12.00v4.00h-12.00zM234.67 0.00h12.00v4.00h-12.00zM234.67 509.00h12.00v4.00h-12.00zM258.33 0.00h12.00v4.00h-12.00zM258.33 509.00h12.00v4.00h-12.00zM282.00 0.00h12.00v4.00h-12.00zM282.00 509.00h12.00v4.00h-12.00zM305.67 0.00h12.00v4.00h-12.00zM305.67 509.00h12.00v4.00h-12.00zM329.33 0.00h12.00v4.00h-12.00zM329.33 509.00h12.00v4.00h-12.00zM353.00 0.00h10.00v4.00h-10.00zM353.00 509.00h10.00v4.00h-10.00zM0.00 0.00h4.00v10.00h-4.00zM359.00 0.00h4.00v10.00h-4.00zM0.00 20.95h4.00v12.00h-4.00zM359.00 20.95h4.00v12.00h-4.00zM0.00 43.91h4.00v12.00h-4.00zM359.00 43.91h4.00v12.00h-4.00zM0.00 66.86h4.00v12.00h-4.00zM359.00 66.86h4.00v12.00h-4.00zM0.00 89.82h4.00v12.00h-4.00zM359.00 89.82h4.00v12.00h-4.00zM0.00 112.77h4.00v12.00h-4.00zM359.00 112.77h4.00v12.00h-4.00zM0.00 135.73h4.00v12.00h-4.00zM359.00 135.73h4.00v12.00h-4.00zM0.00 158.68h4.00v12.00h-4.00zM359.00 158.68h4.00v12.00h-4.00zM0.00 181.64h4.00v12.00h-4.00zM359.00 181.64h4.00v12.00h-4.00zM0.00 204.59h4.00v12.00h-4.00zM359.00 204.59h4.00v12.00h-4.00zM0.00 227.55h4.00v12.00h-4.00zM359.00 227.55h4.00v12.00h-4.00zM0.00 250.50h4.00v12.00h-4.00zM359.00 250.50h4.00v12.00h-4.00zM0.00 273.45h4.00v12.00h-4.00zM359.00 273.45h4.00v12.00h-4.00zM0.00 296.41h4.00v12.00h-4.00zM359.00 296.41h4.00v12.00h-4.00zM0.00 319.36h4.00v12.00h-4.00zM359.00 319.36h4.00v12.00h-4.00zM0.00 342.32h4.00v12.00h-4.00zM359.00 342.32h4.00v12.00h-4.00zM0.00 365.27h4.00v12.00h-4.00zM359.00 365.27h4.00v12.00h-4.00zM0.00 388.23h4.00v12.00h-4.00zM359.00 388.23h4.00v12.00h-4.00zM0.00 411.18h4.00v12.00h-4.00zM359.00 411.18h4.00v12.00h-4.00zM0.00 434.14h4.00v12.00h-4.00zM359.00 434.14h4.00v12.00h-4.00zM0.00 457.09h4.00v12.00h-4.00zM359.00 457.09h4.00v12.00h-4.00zM0.00 480.05h4.00v12.00h-4.00zM359.00 480.05h4.00v12.00h-4.00zM0.00 503.00h4.00v10.00h-4.00zM359.00 503.00h4.00v10.00h-4.00z"/></svg><div class="h2" style="top:35.33px">KeepLeft Android Remix</div><div class="p" style="top:80.84px;left:14px">Classic street racing based game now</div><div class="p" style="top:99.84px;left:14px">for your Android device! Made with</div><div class="p" style="top:118.84px;left:14px">GameMaker 1.4</div></div><div class="card" style="left:21.4px;top:597.0px;width:362.6px;height:300.0px"><svg class="db" width="363" height="300" viewBox="0 0 363 300"><path fill="#ff0a78" d="M0.00 0.00h10.00v4.00h-10.00zM0.00 296.00h10.00v4.00h-10.00zM21.67 0.00h12.00v4.00h-12.00zM21.67 296.00h12.00v4.00h-12.00zM45.33 0.00h12.00v4.00h-12.00zM45.33 296.00h12.00v4.00h-12.00zM69.00 0.00h12.00v4.00h-12.00zM69.00 296.00h12.00v4.00h-12.00zM92.67 0.00h12.00v4.00h-12.00zM92.67 296.00h12.00v4.00h-12.00zM116.33 0.00h12.00v4.00h-12.00zM116.33 296.00h12.00v4.00h-12.00zM140.00 0.00h12.00v4.00h-12.00zM140.00 296.00h12.00v4.00h-12.00zM163.67 0.00h12.00v4.00h-12.00zM163.67 296.00h12.00v4.00h-12.00zM187.33 0.00h12.00v4.00h-12.00zM187.33 296.00h12.00v4.00h-12.00zM211.00 0.00h12.00v4.00h-12.00zM211.00 296.00h12.00v4.00h-12.00zM234.67 0.00h12.00v4.00h-12.00zM234.67 296.00h12.00v4.00h-12.00zM258.33 0.00h12.00v4.00h-12.00zM258.33 296.00h12.00v4.00h-12.00zM282.00 0.00h12.00v4.00h-12.00zM282.00 296.00h12.00v4.00h-12.00zM305.67 0.00h12.00v4.00h-12.00zM305.67 296.00h12.00v4.00h-12.00zM329.33 0.00h12.00v4.00h-12.00zM329.33 296.00h12.00v4.00h-12.00zM353.00 0.00h10.00v4.00h-10.00zM353.00 296.00h10.00v4.00h-10.00zM0.00 0.00h4.00v10.00h-4.00zM359.00 0.00h4.00v10.00h-4.00zM0.00 20.46h4.00v12.00h-4.00zM359.00 20.46h4.00v12.00h-4.00zM0.00 42.92h4.00v12.00h-4.00zM359.00 42.92h4.00v12.00h-4.00zM0.00 65.38h4.00v12.00h-4.00zM359.00 65.38h4.00v12.00h-4.00zM0.00 87.85h4.00v12.00h-4.00zM359.00 87.85h4.00v12.00h-4.00zM0.00 110.31h4.00v12.00h-4.00zM359.00 110.31h4.00v12.00h-4.00zM0.00 132.77h4.00v12.00h-4.00zM359.00 132.77h4.00v12.00h-4.00zM0.00 155.23h4.00v12.00h-4.00zM359.00 155.23h4.00v12.00h-4.00zM0.00 177.69h4.00v12.00h-4.00zM359.00 177.69h4.00v12.00h-4.00zM0.00 200.15h4.00v12.00h-4.00zM359.00 200.15h4.00v12.00h-4.00zM0.00 222.62h4.00v12.00h-4.00zM359.00 222.62h4.00v12.00h-4.00zM0.00 245.08h4.00v12.00h-4.00zM359.00 245.08h4.00v12.00h-4.00zM0.00 267.54h4.00v12.00h-4.00zM359.00 267.54h4.00v12.00h-4.00zM0.00 290.00h4.00v10.00h-4.00zM359.00 290.00h4.00v10.00h-4.00z"/></svg><div class="h2" style="top:34.93px">pSync</div><div class="p" style="top:80.84px;left:14px">Written in Python, looks for changes</div><div class="p" style="top:99.84px;left:14px">and notifies you about them. Useful</div></div><div class="card" style="left:401.2px;top:597.0px;width:362.8px;height:300.0px"><svg class="db" width="363" height="300" viewBox="0 0 363 300"><path fill="#ff0a78" d="M0.00 0.00h10.00v4.00h-10.00zM0.00 296.00h10.00v4.00h-10.00zM21.67 0.00h12.00v4.00h-12.00zM21.67 296.00h12.00v4.00h-12.00zM45.33 0.00h12.00v4.00h-12.00zM45.33 296.00h12.00v4.00h-12.00zM69.00 0.00h12.00v4.00h-12.00zM69.00 296.00h12.00v4.00h-12.00zM92.67 0.00h12.00v4.00h-12.00zM92.67 296.00h12.00v4.00h-12.00zM116.33 0.00h12.00v4.00h-12.00zM116.33 296.00h12.00v4.00h-12.00zM140.00 0.00h12.00v4.00h-12.00zM140.00 296.00h12.00v4.00h-12.00zM163.67 0.00h12.00v4.00h-12.00zM163.67 296.00h12.00v4.00h-12.00zM187.33 0.00h12.00v4.00h-12.00zM187.33 296.00h12.00v4.00h-12.00zM211.00 0.00h12.00v4.00h-12.00zM211.00 296.00h12.00v4.00h-12.00zM234.67 0.00h12.00v4.00h-12.00zM234.67 296.00h12.00v4.00h-12.00zM258.33 0.00h12.00v4.00h-12.00zM258.33 296.00h12.00v4.00h-12.00zM282.00 0.00h12.00v4.00h-12.00zM282.00 296.00h12.00v4.00h-12.00zM305.67 0.00h12.00v4.00h-12.00zM305.67 296.00h12.00v4.00h-12.00zM329.33 0.00h12.00v4.00h-12.00zM329.33 296.00h12.00v4.00h-12.00zM353.00 0.00h10.00v4.00h-10.00zM353.00 296.00h10.00v4.00h-10.00zM0.00 0.00h4.00v10.00h-4.00zM359.00 0.00h4.00v10.00h-4.00zM0.00 20.46h4.00v12.00h-4.00zM359.00 20.46h4.00v12.00h-4.00zM0.00 42.92h4.00v12.00h-4.00zM359.00 42.92h4.00v12.00h-4.00zM0.00 65.38h4.00v12.00h-4.00zM359.00 65.38h4.00v12.00h-4.00zM0.00 87.85h4.00v12.00h-4.00zM359.00 87.85h4.00v12.00h-4.00zM0.00 110.31h4.00v12.00h-4.00zM359.00 110.31h4.00v12.00h-4.00zM0.00 132.77h4.00v12.00h-4.00zM359.00 132.77h4.00v12.00h-4.00zM0.00 155.23h4.00v12.00h-4.00zM359.00 155.23h4.00v12.00h-4.00zM0.00 177.69h4.00v12.00h-4.00zM359.00 177.69h4.00v12.00h-4.00zM0.00 200.15h4.00v12.00h-4.00zM359.00 200.15h4.00v12.00h-4.00zM0.00 222.62h4.00v12.00h-4.00zM359.00 222.62h4.00v12.00h-4.00zM0.00 245.08h4.00v12.00h-4.00zM359.00 245.08h4.00v12.00h-4.00zM0.00 267.54h4.00v12.00h-4.00zM359.00 267.54h4.00v12.00h-4.00zM0.00 290.00h4.00v10.00h-4.00zM359.00 290.00h4.00v10.00h-4.00z"/></svg><div class="h2" style="top:32.93px">MySQL&lt;-&gt;PHP&lt;-&gt;Java</div><div class="p" style="top:79.64px;left:14px">Ever wanted to connect to your</div><div class="p" style="top:98.64px;left:14px">localhost only MySQL database with</div></div><div class="abs" style="left:820px;top:0;width:14px;height:762px;background:#2b2b2b"></div><div class="abs" style="left:822px;top:13.7px;width:10px;height:137px;background:#6b6b6b"></div></div><div class="abs" style="left:0;top:0;width:834px;height:762px;box-shadow:inset 0 0 0 3px #1d4f80;"></div></div><div class="win" style="left:530.1px;top:365.1px;width:825px;height:836px;transform:scale(0.1343)"><div class="abs" style="left:0;top:0;width:825px;height:27px;background:#1b1b1b"></div><div class="abs" style="left:0;top:0;width:242px;height:27px;background:#2b2b2b"></div><div class="abs" style="left:0;top:27px;width:825px;height:33px;background:#2b2b2b;border-bottom:2px solid #0a0a0a"></div><div class="abs" style="left:6px;top:7px;width:17px;height:17px;background:#2a1618"></div><div class="abs" style="left:30px;top:8px;font:bold 11px/16px 'Liberation Sans',sans-serif;color:#fff;white-space:pre">Adam's projects</div><div class="abs" style="left:228px;top:8px;font:14px/16px 'Liberation Sans',sans-serif;color:#aaa">&#215;</div><div class="abs" style="left:252px;top:6px;font:18px/18px 'Liberation Sans',sans-serif;color:#ccc">+</div><div class="abs" style="left:719px;top:15px;width:11px;height:1px;background:#aaa"></div><div class="abs" style="left:758px;top:10px;width:10px;height:10px;border:1px solid #bbb"></div><div class="abs" style="left:795px;top:6px;font:16px/16px 'Liberation Sans',sans-serif;color:#bbb">&#215;</div><div class="abs" style="left:99px;top:32.5px;width:491px;height:22px;background:#1c1c1c;border:1px solid #0a0a0a"></div><svg class="abs" style="left:13px;top:34.5px" width="20" height="19" viewBox="0 0 20 19"><path d="M10 2L18.3 10.3H15.3V17.3H11.5V12.8H8.5V17.3H4.7V10.3H1.7Z" fill="#a6a6a6"/></svg><div class="abs" style="left:45px;top:29.5px;width:28px;height:28px;border-radius:50%;background:#2b2b2b;border:1.5px solid #0d0d0d"></div><svg class="abs" style="left:50px;top:34.5px" width="18" height="18" viewBox="0 0 18 18"><path d="M3 9L13 3V15Z" fill="#b4b4b4"/></svg><svg class="abs" style="left:78px;top:34.5px" width="18" height="18" viewBox="0 0 18 18"><path d="M14 9L4 3V15Z" fill="#b4b4b4"/></svg><div class="abs" style="left:104px;top:35.5px;width:16px;height:16px;background:#262626"></div><div class="abs" style="left:124px;top:35.5px;font:11.4px/16px 'Liberation Sans',sans-serif;color:#ddd;white-space:pre">trapped inside web making factory. Send help.</div><svg class="abs" style="left:546px;top:40.5px" width="10" height="6" viewBox="0 0 10 6"><path d="M0 0H10L5 6Z" fill="#a6a6a6"/></svg><div class="abs" style="left:560px;top:36.5px;width:14px;height:14px;border-radius:50%;border:3px solid #a6a6a6"></div><svg class="abs" style="left:600px;top:35.5px" width="16" height="16" viewBox="0 0 16 16"><path d="M8 1.2L10 5.8L15 6.2L11.2 9.5L12.4 14.5L8 11.8L3.6 14.5L4.8 9.5L1 6.2L6 5.8Z" fill="#a6a6a6"/></svg><div class="abs" style="left:629px;top:35.5px;width:14px;height:16px;background:#a6a6a6;border-radius:2px"></div><svg class="abs" style="left:663px;top:35.5px" width="16" height="16" viewBox="0 0 16 16"><path d="M5.5 1H10.5V8H14L8 15L2 8H5.5Z" fill="#8a8a8a"/></svg><div class="abs" style="left:699px;top:35.5px;width:14px;height:16px;background:#a6a6a6;border-radius:0 0 7px 7px"></div><div class="abs" style="left:754px;top:35.5px;width:14px;height:16px;background:#a6a6a6;border-radius:0 0 7px 7px"></div><svg class="abs" style="left:792px;top:36.5px" width="16" height="14" viewBox="0 0 16 14"><path d="M1 3H15M1 7H15M1 11H15" stroke="#aaa" stroke-width="2"/></svg><div class="abs" style="left:0;top:60px;width:825px;height:776px;overflow:hidden"><div class="abs" style="left:0;top:-30px;width:98px;height:79px;background:#1e1e2e;border:4px solid #15124a;border-radius:10px"></div><div class="btn" style="left:14px;top:11.2px">Projects</div><div class="abs" style="left:582px;top:-30px;width:98.0px;height:77px;background:#3b2541;border:2px solid #d10f3c;border-radius:10px"></div><div class="btn" style="left:593.0px;top:11.2px">About me</div><div class="abs" style="left:690px;top:-30px;width:77.0px;height:77px;background:#3b2541;border:2px solid #d10f3c;border-radius:10px"></div><div class="btn" style="left:701.0px;top:11.2px">Awards</div><div class="card" style="left:6.0px;top:71.0px;width:370.8px;height:563.0px"><svg class="db" width="371" height="563" viewBox="0 0 371 563"><path fill="#ff0a78" d="M0.00 0.00h10.00v4.00h-10.00zM0.00 559.00h10.00v4.00h-10.00zM20.69 0.00h12.00v4.00h-12.00zM20.69 559.00h12.00v4.00h-12.00zM43.38 0.00h12.00v4.00h-12.00zM43.38 559.00h12.00v4.00h-12.00zM66.06 0.00h12.00v4.00h-12.00zM66.06 559.00h12.00v4.00h-12.00zM88.75 0.00h12.00v4.00h-12.00zM88.75 559.00h12.00v4.00h-12.00zM111.44 0.00h12.00v4.00h-12.00zM111.44 559.00h12.00v4.00h-12.00zM134.12 0.00h12.00v4.00h-12.00zM134.12 559.00h12.00v4.00h-12.00zM156.81 0.00h12.00v4.00h-12.00zM156.81 559.00h12.00v4.00h-12.00zM179.50 0.00h12.00v4.00h-12.00zM179.50 559.00h12.00v4.00h-12.00zM202.19 0.00h12.00v4.00h-12.00zM202.19 559.00h12.00v4.00h-12.00zM224.88 0.00h12.00v4.00h-12.00zM224.88 559.00h12.00v4.00h-12.00zM247.56 0.00h12.00v4.00h-12.00zM247.56 559.00h12.00v4.00h-12.00zM270.25 0.00h12.00v4.00h-12.00zM270.25 559.00h12.00v4.00h-12.00zM292.94 0.00h12.00v4.00h-12.00zM292.94 559.00h12.00v4.00h-12.00zM315.62 0.00h12.00v4.00h-12.00zM315.62 559.00h12.00v4.00h-12.00zM338.31 0.00h12.00v4.00h-12.00zM338.31 559.00h12.00v4.00h-12.00zM361.00 0.00h10.00v4.00h-10.00zM361.00 559.00h10.00v4.00h-10.00zM0.00 0.00h4.00v10.00h-4.00zM367.00 0.00h4.00v10.00h-4.00zM0.00 21.12h4.00v12.00h-4.00zM367.00 21.12h4.00v12.00h-4.00zM0.00 44.25h4.00v12.00h-4.00zM367.00 44.25h4.00v12.00h-4.00zM0.00 67.38h4.00v12.00h-4.00zM367.00 67.38h4.00v12.00h-4.00zM0.00 90.50h4.00v12.00h-4.00zM367.00 90.50h4.00v12.00h-4.00zM0.00 113.62h4.00v12.00h-4.00zM367.00 113.62h4.00v12.00h-4.00zM0.00 136.75h4.00v12.00h-4.00zM367.00 136.75h4.00v12.00h-4.00zM0.00 159.88h4.00v12.00h-4.00zM367.00 159.88h4.00v12.00h-4.00zM0.00 183.00h4.00v12.00h-4.00zM367.00 183.00h4.00v12.00h-4.00zM0.00 206.12h4.00v12.00h-4.00zM367.00 206.12h4.00v12.00h-4.00zM0.00 229.25h4.00v12.00h-4.00zM367.00 229.25h4.00v12.00h-4.00zM0.00 252.38h4.00v12.00h-4.00zM367.00 252.38h4.00v12.00h-4.00zM0.00 275.50h4.00v12.00h-4.00zM367.00 275.50h4.00v12.00h-4.00zM0.00 298.62h4.00v12.00h-4.00zM367.00 298.62h4.00v12.00h-4.00zM0.00 321.75h4.00v12.00h-4.00zM367.00 321.75h4.00v12.00h-4.00zM0.00 344.88h4.00v12.00h-4.00zM367.00 344.88h4.00v12.00h-4.00zM0.00 368.00h4.00v12.00h-4.00zM367.00 368.00h4.00v12.00h-4.00zM0.00 391.12h4.00v12.00h-4.00zM367.00 391.12h4.00v12.00h-4.00zM0.00 414.25h4.00v12.00h-4.00zM367.00 414.25h4.00v12.00h-4.00zM0.00 437.38h4.00v12.00h-4.00zM367.00 437.38h4.00v12.00h-4.00zM0.00 460.50h4.00v12.00h-4.00zM367.00 460.50h4.00v12.00h-4.00zM0.00 483.62h4.00v12.00h-4.00zM367.00 483.62h4.00v12.00h-4.00zM0.00 506.75h4.00v12.00h-4.00zM367.00 506.75h4.00v12.00h-4.00zM0.00 529.88h4.00v12.00h-4.00zM367.00 529.88h4.00v12.00h-4.00zM0.00 553.00h4.00v10.00h-4.00zM367.00 553.00h4.00v10.00h-4.00z"/></svg><div class="h2" style="top:38.93px">More comming soon</div><div class="p" style="top:85.24px;left:14px">Still working on the most exciting</div><div class="p" style="top:104.24px;left:14px">ones</div><svg class="abs" style="left:56.5px;top:145.2px" width="304.3" height="404.8" viewBox="78 255 212 282"><use href="#cartoon"/></svg></div><div class="card" style="left:394.0px;top:71.0px;width:365.5px;height:563.0px"><svg class="db" width="366" height="563" viewBox="0 0 366 563"><path fill="#ff0a78" d="M0.00 0.00h10.00v4.00h-10.00zM0.00 559.00h10.00v4.00h-10.00zM20.38 0.00h12.00v4.00h-12.00zM20.38 559.00h12.00v4.00h-12.00zM42.75 0.00h12.00v4.00h-12.00zM42.75 559.00h12.00v4.00h-12.00zM65.12 0.00h12.00v4.00h-12.00zM65.12 559.00h12.00v4.00h-12.00zM87.50 0.00h12.00v4.00h-12.00zM87.50 559.00h12.00v4.00h-12.00zM109.88 0.00h12.00v4.00h-12.00zM109.88 559.00h12.00v4.00h-12.00zM132.25 0.00h12.00v4.00h-12.00zM132.25 559.00h12.00v4.00h-12.00zM154.62 0.00h12.00v4.00h-12.00zM154.62 559.00h12.00v4.00h-12.00zM177.00 0.00h12.00v4.00h-12.00zM177.00 559.00h12.00v4.00h-12.00zM199.38 0.00h12.00v4.00h-12.00zM199.38 559.00h12.00v4.00h-12.00zM221.75 0.00h12.00v4.00h-12.00zM221.75 559.00h12.00v4.00h-12.00zM244.12 0.00h12.00v4.00h-12.00zM244.12 559.00h12.00v4.00h-12.00zM266.50 0.00h12.00v4.00h-12.00zM266.50 559.00h12.00v4.00h-12.00zM288.88 0.00h12.00v4.00h-12.00zM288.88 559.00h12.00v4.00h-12.00zM311.25 0.00h12.00v4.00h-12.00zM311.25 559.00h12.00v4.00h-12.00zM333.62 0.00h12.00v4.00h-12.00zM333.62 559.00h12.00v4.00h-12.00zM356.00 0.00h10.00v4.00h-10.00zM356.00 559.00h10.00v4.00h-10.00zM0.00 0.00h4.00v10.00h-4.00zM362.00 0.00h4.00v10.00h-4.00zM0.00 21.12h4.00v12.00h-4.00zM362.00 21.12h4.00v12.00h-4.00zM0.00 44.25h4.00v12.00h-4.00zM362.00 44.25h4.00v12.00h-4.00zM0.00 67.38h4.00v12.00h-4.00zM362.00 67.38h4.00v12.00h-4.00zM0.00 90.50h4.00v12.00h-4.00zM362.00 90.50h4.00v12.00h-4.00zM0.00 113.62h4.00v12.00h-4.00zM362.00 113.62h4.00v12.00h-4.00zM0.00 136.75h4.00v12.00h-4.00zM362.00 136.75h4.00v12.00h-4.00zM0.00 159.88h4.00v12.00h-4.00zM362.00 159.88h4.00v12.00h-4.00zM0.00 183.00h4.00v12.00h-4.00zM362.00 183.00h4.00v12.00h-4.00zM0.00 206.12h4.00v12.00h-4.00zM362.00 206.12h4.00v12.00h-4.00zM0.00 229.25h4.00v12.00h-4.00zM362.00 229.25h4.00v12.00h-4.00zM0.00 252.38h4.00v12.00h-4.00zM362.00 252.38h4.00v12.00h-4.00zM0.00 275.50h4.00v12.00h-4.00zM362.00 275.50h4.00v12.00h-4.00zM0.00 298.62h4.00v12.00h-4.00zM362.00 298.62h4.00v12.00h-4.00zM0.00 321.75h4.00v12.00h-4.00zM362.00 321.75h4.00v12.00h-4.00zM0.00 344.88h4.00v12.00h-4.00zM362.00 344.88h4.00v12.00h-4.00zM0.00 368.00h4.00v12.00h-4.00zM362.00 368.00h4.00v12.00h-4.00zM0.00 391.12h4.00v12.00h-4.00zM362.00 391.12h4.00v12.00h-4.00zM0.00 414.25h4.00v12.00h-4.00zM362.00 414.25h4.00v12.00h-4.00zM0.00 437.38h4.00v12.00h-4.00zM362.00 437.38h4.00v12.00h-4.00zM0.00 460.50h4.00v12.00h-4.00zM362.00 460.50h4.00v12.00h-4.00zM0.00 483.62h4.00v12.00h-4.00zM362.00 483.62h4.00v12.00h-4.00zM0.00 506.75h4.00v12.00h-4.00zM362.00 506.75h4.00v12.00h-4.00zM0.00 529.88h4.00v12.00h-4.00zM362.00 529.88h4.00v12.00h-4.00zM0.00 553.00h4.00v10.00h-4.00zM362.00 553.00h4.00v10.00h-4.00z"/></svg><div class="h2" style="top:38.93px">KeepLeft Android Remix</div><div class="p" style="top:85.24px;left:14px">Classic street racing based game now</div><div class="p" style="top:104.24px;left:14px">for your Android device! Made with</div><div class="p" style="top:123.24px;left:14px">GameMaker 1.4</div></div><div class="card" style="left:6.0px;top:655.6px;width:370.8px;height:300.0px"><svg class="db" width="371" height="300" viewBox="0 0 371 300"><path fill="#ff0a78" d="M0.00 0.00h10.00v4.00h-10.00zM0.00 296.00h10.00v4.00h-10.00zM20.69 0.00h12.00v4.00h-12.00zM20.69 296.00h12.00v4.00h-12.00zM43.38 0.00h12.00v4.00h-12.00zM43.38 296.00h12.00v4.00h-12.00zM66.06 0.00h12.00v4.00h-12.00zM66.06 296.00h12.00v4.00h-12.00zM88.75 0.00h12.00v4.00h-12.00zM88.75 296.00h12.00v4.00h-12.00zM111.44 0.00h12.00v4.00h-12.00zM111.44 296.00h12.00v4.00h-12.00zM134.12 0.00h12.00v4.00h-12.00zM134.12 296.00h12.00v4.00h-12.00zM156.81 0.00h12.00v4.00h-12.00zM156.81 296.00h12.00v4.00h-12.00zM179.50 0.00h12.00v4.00h-12.00zM179.50 296.00h12.00v4.00h-12.00zM202.19 0.00h12.00v4.00h-12.00zM202.19 296.00h12.00v4.00h-12.00zM224.88 0.00h12.00v4.00h-12.00zM224.88 296.00h12.00v4.00h-12.00zM247.56 0.00h12.00v4.00h-12.00zM247.56 296.00h12.00v4.00h-12.00zM270.25 0.00h12.00v4.00h-12.00zM270.25 296.00h12.00v4.00h-12.00zM292.94 0.00h12.00v4.00h-12.00zM292.94 296.00h12.00v4.00h-12.00zM315.62 0.00h12.00v4.00h-12.00zM315.62 296.00h12.00v4.00h-12.00zM338.31 0.00h12.00v4.00h-12.00zM338.31 296.00h12.00v4.00h-12.00zM361.00 0.00h10.00v4.00h-10.00zM361.00 296.00h10.00v4.00h-10.00zM0.00 0.00h4.00v10.00h-4.00zM367.00 0.00h4.00v10.00h-4.00zM0.00 20.46h4.00v12.00h-4.00zM367.00 20.46h4.00v12.00h-4.00zM0.00 42.92h4.00v12.00h-4.00zM367.00 42.92h4.00v12.00h-4.00zM0.00 65.38h4.00v12.00h-4.00zM367.00 65.38h4.00v12.00h-4.00zM0.00 87.85h4.00v12.00h-4.00zM367.00 87.85h4.00v12.00h-4.00zM0.00 110.31h4.00v12.00h-4.00zM367.00 110.31h4.00v12.00h-4.00zM0.00 132.77h4.00v12.00h-4.00zM367.00 132.77h4.00v12.00h-4.00zM0.00 155.23h4.00v12.00h-4.00zM367.00 155.23h4.00v12.00h-4.00zM0.00 177.69h4.00v12.00h-4.00zM367.00 177.69h4.00v12.00h-4.00zM0.00 200.15h4.00v12.00h-4.00zM367.00 200.15h4.00v12.00h-4.00zM0.00 222.62h4.00v12.00h-4.00zM367.00 222.62h4.00v12.00h-4.00zM0.00 245.08h4.00v12.00h-4.00zM367.00 245.08h4.00v12.00h-4.00zM0.00 267.54h4.00v12.00h-4.00zM367.00 267.54h4.00v12.00h-4.00zM0.00 290.00h4.00v10.00h-4.00zM367.00 290.00h4.00v10.00h-4.00z"/></svg><div class="h2" style="top:38.93px">pSync</div><div class="p" style="top:85.24px;left:14px">Written in Python, looks for changes</div></div><div class="card" style="left:394.0px;top:655.6px;width:365.5px;height:300.0px"><svg class="db" width="366" height="300" viewBox="0 0 366 300"><path fill="#ff0a78" d="M0.00 0.00h10.00v4.00h-10.00zM0.00 296.00h10.00v4.00h-10.00zM20.38 0.00h12.00v4.00h-12.00zM20.38 296.00h12.00v4.00h-12.00zM42.75 0.00h12.00v4.00h-12.00zM42.75 296.00h12.00v4.00h-12.00zM65.12 0.00h12.00v4.00h-12.00zM65.12 296.00h12.00v4.00h-12.00zM87.50 0.00h12.00v4.00h-12.00zM87.50 296.00h12.00v4.00h-12.00zM109.88 0.00h12.00v4.00h-12.00zM109.88 296.00h12.00v4.00h-12.00zM132.25 0.00h12.00v4.00h-12.00zM132.25 296.00h12.00v4.00h-12.00zM154.62 0.00h12.00v4.00h-12.00zM154.62 296.00h12.00v4.00h-12.00zM177.00 0.00h12.00v4.00h-12.00zM177.00 296.00h12.00v4.00h-12.00zM199.38 0.00h12.00v4.00h-12.00zM199.38 296.00h12.00v4.00h-12.00zM221.75 0.00h12.00v4.00h-12.00zM221.75 296.00h12.00v4.00h-12.00zM244.12 0.00h12.00v4.00h-12.00zM244.12 296.00h12.00v4.00h-12.00zM266.50 0.00h12.00v4.00h-12.00zM266.50 296.00h12.00v4.00h-12.00zM288.88 0.00h12.00v4.00h-12.00zM288.88 296.00h12.00v4.00h-12.00zM311.25 0.00h12.00v4.00h-12.00zM311.25 296.00h12.00v4.00h-12.00zM333.62 0.00h12.00v4.00h-12.00zM333.62 296.00h12.00v4.00h-12.00zM356.00 0.00h10.00v4.00h-10.00zM356.00 296.00h10.00v4.00h-10.00zM0.00 0.00h4.00v10.00h-4.00zM362.00 0.00h4.00v10.00h-4.00zM0.00 20.46h4.00v12.00h-4.00zM362.00 20.46h4.00v12.00h-4.00zM0.00 42.92h4.00v12.00h-4.00zM362.00 42.92h4.00v12.00h-4.00zM0.00 65.38h4.00v12.00h-4.00zM362.00 65.38h4.00v12.00h-4.00zM0.00 87.85h4.00v12.00h-4.00zM362.00 87.85h4.00v12.00h-4.00zM0.00 110.31h4.00v12.00h-4.00zM362.00 110.31h4.00v12.00h-4.00zM0.00 132.77h4.00v12.00h-4.00zM362.00 132.77h4.00v12.00h-4.00zM0.00 155.23h4.00v12.00h-4.00zM362.00 155.23h4.00v12.00h-4.00zM0.00 177.69h4.00v12.00h-4.00zM362.00 177.69h4.00v12.00h-4.00zM0.00 200.15h4.00v12.00h-4.00zM362.00 200.15h4.00v12.00h-4.00zM0.00 222.62h4.00v12.00h-4.00zM362.00 222.62h4.00v12.00h-4.00zM0.00 245.08h4.00v12.00h-4.00zM362.00 245.08h4.00v12.00h-4.00zM0.00 267.54h4.00v12.00h-4.00zM362.00 267.54h4.00v12.00h-4.00zM0.00 290.00h4.00v10.00h-4.00zM362.00 290.00h4.00v10.00h-4.00z"/></svg><div class="h2" style="top:38.93px">MySQL&lt;-&gt;PHP&lt;-&gt;Java</div><div class="p" style="top:85.24px;left:14px">Ever wanted to connect to your</div></div><div class="abs" style="left:811px;top:0;width:14px;height:836px;background:#2b2b2b"></div><div class="abs" style="left:813px;top:20px;width:10px;height:140px;background:#6b6b6b"></div></div><div class="abs" style="left:0;top:0;width:825px;height:836px;"></div></div><div class="win" style="left:585.3px;top:404.2px;width:825px;height:1011px;transform:scale(0.0542)"><div class="abs" style="left:0;top:0;width:825px;height:30px;background:#1b1b1b"></div><div class="abs" style="left:0;top:0;width:242px;height:30px;background:#2b2b2b"></div><div class="abs" style="left:0;top:30px;width:825px;height:36px;background:#2b2b2b;border-bottom:2px solid #0a0a0a"></div><div class="abs" style="left:6px;top:7px;width:17px;height:17px;background:#2a1618"></div><div class="abs" style="left:30px;top:8px;font:bold 11px/16px 'Liberation Sans',sans-serif;color:#fff;white-space:pre">Adam's projects</div><div class="abs" style="left:228px;top:8px;font:14px/16px 'Liberation Sans',sans-serif;color:#aaa">&#215;</div><div class="abs" style="left:252px;top:6px;font:18px/18px 'Liberation Sans',sans-serif;color:#ccc">+</div><div class="abs" style="left:719px;top:15px;width:11px;height:1px;background:#aaa"></div><div class="abs" style="left:758px;top:10px;width:10px;height:10px;border:1px solid #bbb"></div><div class="abs" style="left:795px;top:6px;font:16px/16px 'Liberation Sans',sans-serif;color:#bbb">&#215;</div><div class="abs" style="left:99px;top:37.0px;width:461px;height:22px;background:#1c1c1c;border:1px solid #0a0a0a"></div><svg class="abs" style="left:13px;top:39.0px" width="20" height="19" viewBox="0 0 20 19"><path d="M10 2L18.3 10.3H15.3V17.3H11.5V12.8H8.5V17.3H4.7V10.3H1.7Z" fill="#a6a6a6"/></svg><div class="abs" style="left:45px;top:34.0px;width:28px;height:28px;border-radius:50%;background:#2b2b2b;border:1.5px solid #0d0d0d"></div><svg class="abs" style="left:50px;top:39.0px" width="18" height="18" viewBox="0 0 18 18"><path d="M3 9L13 3V15Z" fill="#b4b4b4"/></svg><svg class="abs" style="left:78px;top:39.0px" width="18" height="18" viewBox="0 0 18 18"><path d="M14 9L4 3V15Z" fill="#b4b4b4"/></svg><div class="abs" style="left:104px;top:40.0px;width:16px;height:16px;background:#262626"></div><div class="abs" style="left:124px;top:40.0px;font:11.4px/16px 'Liberation Sans',sans-serif;color:#ddd;white-space:pre">keepleft.adamhlavacek.xyz</div><svg class="abs" style="left:516px;top:45.0px" width="10" height="6" viewBox="0 0 10 6"><path d="M0 0H10L5 6Z" fill="#a6a6a6"/></svg><div class="abs" style="left:530px;top:41.0px;width:14px;height:14px;border-radius:50%;border:3px solid #a6a6a6"></div><svg class="abs" style="left:600px;top:40.0px" width="16" height="16" viewBox="0 0 16 16"><path d="M8 1.2L10 5.8L15 6.2L11.2 9.5L12.4 14.5L8 11.8L3.6 14.5L4.8 9.5L1 6.2L6 5.8Z" fill="#a6a6a6"/></svg><div class="abs" style="left:629px;top:40.0px;width:14px;height:16px;background:#a6a6a6;border-radius:2px"></div><svg class="abs" style="left:663px;top:40.0px" width="16" height="16" viewBox="0 0 16 16"><path d="M5.5 1H10.5V8H14L8 15L2 8H5.5Z" fill="#8a8a8a"/></svg><div class="abs" style="left:699px;top:40.0px;width:14px;height:16px;background:#a6a6a6;border-radius:0 0 7px 7px"></div><div class="abs" style="left:754px;top:40.0px;width:14px;height:16px;background:#a6a6a6;border-radius:0 0 7px 7px"></div><svg class="abs" style="left:792px;top:41.0px" width="16" height="14" viewBox="0 0 16 14"><path d="M1 3H15M1 7H15M1 11H15" stroke="#aaa" stroke-width="2"/></svg><div class="abs" style="left:0;top:66px;width:825px;height:945px;overflow:hidden"><div class="abs" style="left:0;top:-30px;width:98px;height:80px;background:#1e1e2e;border:4px solid #15124a;border-radius:10px"></div><div class="btn" style="left:14px;top:12.2px">Projects</div><div class="abs" style="left:560px;top:-30px;width:100.0px;height:78px;background:#3b2541;border:2px solid #d10f3c;border-radius:10px"></div><div class="btn" style="left:571.0px;top:12.2px">About me</div><div class="abs" style="left:670px;top:-30px;width:90.0px;height:78px;background:#3b2541;border:2px solid #d10f3c;border-radius:10px"></div><div class="btn" style="left:681.0px;top:12.2px">Awards</div><div class="card" style="left:20.0px;top:80.0px;width:336.0px;height:699.0px"><svg class="db" width="336" height="699" viewBox="0 0 336 699"><path fill="#ff0a78" d="M0.00 0.00h10.00v4.00h-10.00zM0.00 695.00h10.00v4.00h-10.00zM21.43 0.00h12.00v4.00h-12.00zM21.43 695.00h12.00v4.00h-12.00zM44.86 0.00h12.00v4.00h-12.00zM44.86 695.00h12.00v4.00h-12.00zM68.29 0.00h12.00v4.00h-12.00zM68.29 695.00h12.00v4.00h-12.00zM91.71 0.00h12.00v4.00h-12.00zM91.71 695.00h12.00v4.00h-12.00zM115.14 0.00h12.00v4.00h-12.00zM115.14 695.00h12.00v4.00h-12.00zM138.57 0.00h12.00v4.00h-12.00zM138.57 695.00h12.00v4.00h-12.00zM162.00 0.00h12.00v4.00h-12.00zM162.00 695.00h12.00v4.00h-12.00zM185.43 0.00h12.00v4.00h-12.00zM185.43 695.00h12.00v4.00h-12.00zM208.86 0.00h12.00v4.00h-12.00zM208.86 695.00h12.00v4.00h-12.00zM232.29 0.00h12.00v4.00h-12.00zM232.29 695.00h12.00v4.00h-12.00zM255.71 0.00h12.00v4.00h-12.00zM255.71 695.00h12.00v4.00h-12.00zM279.14 0.00h12.00v4.00h-12.00zM279.14 695.00h12.00v4.00h-12.00zM302.57 0.00h12.00v4.00h-12.00zM302.57 695.00h12.00v4.00h-12.00zM326.00 0.00h10.00v4.00h-10.00zM326.00 695.00h10.00v4.00h-10.00zM0.00 0.00h4.00v10.00h-4.00zM332.00 0.00h4.00v10.00h-4.00zM0.00 21.03h4.00v12.00h-4.00zM332.00 21.03h4.00v12.00h-4.00zM0.00 44.07h4.00v12.00h-4.00zM332.00 44.07h4.00v12.00h-4.00zM0.00 67.10h4.00v12.00h-4.00zM332.00 67.10h4.00v12.00h-4.00zM0.00 90.13h4.00v12.00h-4.00zM332.00 90.13h4.00v12.00h-4.00zM0.00 113.17h4.00v12.00h-4.00zM332.00 113.17h4.00v12.00h-4.00zM0.00 136.20h4.00v12.00h-4.00zM332.00 136.20h4.00v12.00h-4.00zM0.00 159.23h4.00v12.00h-4.00zM332.00 159.23h4.00v12.00h-4.00zM0.00 182.27h4.00v12.00h-4.00zM332.00 182.27h4.00v12.00h-4.00zM0.00 205.30h4.00v12.00h-4.00zM332.00 205.30h4.00v12.00h-4.00zM0.00 228.33h4.00v12.00h-4.00zM332.00 228.33h4.00v12.00h-4.00zM0.00 251.37h4.00v12.00h-4.00zM332.00 251.37h4.00v12.00h-4.00zM0.00 274.40h4.00v12.00h-4.00zM332.00 274.40h4.00v12.00h-4.00zM0.00 297.43h4.00v12.00h-4.00zM332.00 297.43h4.00v12.00h-4.00zM0.00 320.47h4.00v12.00h-4.00zM332.00 320.47h4.00v12.00h-4.00zM0.00 343.50h4.00v12.00h-4.00zM332.00 343.50h4.00v12.00h-4.00zM0.00 366.53h4.00v12.00h-4.00zM332.00 366.53h4.00v12.00h-4.00zM0.00 389.57h4.00v12.00h-4.00zM332.00 389.57h4.00v12.00h-4.00zM0.00 412.60h4.00v12.00h-4.00zM332.00 412.60h4.00v12.00h-4.00zM0.00 435.63h4.00v12.00h-4.00zM332.00 435.63h4.00v12.00h-4.00zM0.00 458.67h4.00v12.00h-4.00zM332.00 458.67h4.00v12.00h-4.00zM0.00 481.70h4.00v12.00h-4.00zM332.00 481.70h4.00v12.00h-4.00zM0.00 504.73h4.00v12.00h-4.00zM332.00 504.73h4.00v12.00h-4.00zM0.00 527.77h4.00v12.00h-4.00zM332.00 527.77h4.00v12.00h-4.00zM0.00 550.80h4.00v12.00h-4.00zM332.00 550.80h4.00v12.00h-4.00zM0.00 573.83h4.00v12.00h-4.00zM332.00 573.83h4.00v12.00h-4.00zM0.00 596.87h4.00v12.00h-4.00zM332.00 596.87h4.00v12.00h-4.00zM0.00 619.90h4.00v12.00h-4.00zM332.00 619.90h4.00v12.00h-4.00zM0.00 642.93h4.00v12.00h-4.00zM332.00 642.93h4.00v12.00h-4.00zM0.00 665.97h4.00v12.00h-4.00zM332.00 665.97h4.00v12.00h-4.00zM0.00 689.00h4.00v10.00h-4.00zM332.00 689.00h4.00v10.00h-4.00z"/></svg><div class="h2" style="top:48.93px">More comming soon</div><div class="p" style="top:96.24px;left:14px">Still working on the most exciting</div><div class="p" style="top:115.24px;left:14px">ones</div><svg class="abs" style="left:44.6px;top:180.6px" width="372.7" height="495.8" viewBox="78 255 212 282"><use href="#cartoon"/></svg></div><div class="card" style="left:371.0px;top:80.0px;width:336.0px;height:699.0px"><svg class="db" width="336" height="699" viewBox="0 0 336 699"><path fill="#ff0a78" d="M0.00 0.00h10.00v4.00h-10.00zM0.00 695.00h10.00v4.00h-10.00zM21.43 0.00h12.00v4.00h-12.00zM21.43 695.00h12.00v4.00h-12.00zM44.86 0.00h12.00v4.00h-12.00zM44.86 695.00h12.00v4.00h-12.00zM68.29 0.00h12.00v4.00h-12.00zM68.29 695.00h12.00v4.00h-12.00zM91.71 0.00h12.00v4.00h-12.00zM91.71 695.00h12.00v4.00h-12.00zM115.14 0.00h12.00v4.00h-12.00zM115.14 695.00h12.00v4.00h-12.00zM138.57 0.00h12.00v4.00h-12.00zM138.57 695.00h12.00v4.00h-12.00zM162.00 0.00h12.00v4.00h-12.00zM162.00 695.00h12.00v4.00h-12.00zM185.43 0.00h12.00v4.00h-12.00zM185.43 695.00h12.00v4.00h-12.00zM208.86 0.00h12.00v4.00h-12.00zM208.86 695.00h12.00v4.00h-12.00zM232.29 0.00h12.00v4.00h-12.00zM232.29 695.00h12.00v4.00h-12.00zM255.71 0.00h12.00v4.00h-12.00zM255.71 695.00h12.00v4.00h-12.00zM279.14 0.00h12.00v4.00h-12.00zM279.14 695.00h12.00v4.00h-12.00zM302.57 0.00h12.00v4.00h-12.00zM302.57 695.00h12.00v4.00h-12.00zM326.00 0.00h10.00v4.00h-10.00zM326.00 695.00h10.00v4.00h-10.00zM0.00 0.00h4.00v10.00h-4.00zM332.00 0.00h4.00v10.00h-4.00zM0.00 21.03h4.00v12.00h-4.00zM332.00 21.03h4.00v12.00h-4.00zM0.00 44.07h4.00v12.00h-4.00zM332.00 44.07h4.00v12.00h-4.00zM0.00 67.10h4.00v12.00h-4.00zM332.00 67.10h4.00v12.00h-4.00zM0.00 90.13h4.00v12.00h-4.00zM332.00 90.13h4.00v12.00h-4.00zM0.00 113.17h4.00v12.00h-4.00zM332.00 113.17h4.00v12.00h-4.00zM0.00 136.20h4.00v12.00h-4.00zM332.00 136.20h4.00v12.00h-4.00zM0.00 159.23h4.00v12.00h-4.00zM332.00 159.23h4.00v12.00h-4.00zM0.00 182.27h4.00v12.00h-4.00zM332.00 182.27h4.00v12.00h-4.00zM0.00 205.30h4.00v12.00h-4.00zM332.00 205.30h4.00v12.00h-4.00zM0.00 228.33h4.00v12.00h-4.00zM332.00 228.33h4.00v12.00h-4.00zM0.00 251.37h4.00v12.00h-4.00zM332.00 251.37h4.00v12.00h-4.00zM0.00 274.40h4.00v12.00h-4.00zM332.00 274.40h4.00v12.00h-4.00zM0.00 297.43h4.00v12.00h-4.00zM332.00 297.43h4.00v12.00h-4.00zM0.00 320.47h4.00v12.00h-4.00zM332.00 320.47h4.00v12.00h-4.00zM0.00 343.50h4.00v12.00h-4.00zM332.00 343.50h4.00v12.00h-4.00zM0.00 366.53h4.00v12.00h-4.00zM332.00 366.53h4.00v12.00h-4.00zM0.00 389.57h4.00v12.00h-4.00zM332.00 389.57h4.00v12.00h-4.00zM0.00 412.60h4.00v12.00h-4.00zM332.00 412.60h4.00v12.00h-4.00zM0.00 435.63h4.00v12.00h-4.00zM332.00 435.63h4.00v12.00h-4.00zM0.00 458.67h4.00v12.00h-4.00zM332.00 458.67h4.00v12.00h-4.00zM0.00 481.70h4.00v12.00h-4.00zM332.00 481.70h4.00v12.00h-4.00zM0.00 504.73h4.00v12.00h-4.00zM332.00 504.73h4.00v12.00h-4.00zM0.00 527.77h4.00v12.00h-4.00zM332.00 527.77h4.00v12.00h-4.00zM0.00 550.80h4.00v12.00h-4.00zM332.00 550.80h4.00v12.00h-4.00zM0.00 573.83h4.00v12.00h-4.00zM332.00 573.83h4.00v12.00h-4.00zM0.00 596.87h4.00v12.00h-4.00zM332.00 596.87h4.00v12.00h-4.00zM0.00 619.90h4.00v12.00h-4.00zM332.00 619.90h4.00v12.00h-4.00zM0.00 642.93h4.00v12.00h-4.00zM332.00 642.93h4.00v12.00h-4.00zM0.00 665.97h4.00v12.00h-4.00zM332.00 665.97h4.00v12.00h-4.00zM0.00 689.00h4.00v10.00h-4.00zM332.00 689.00h4.00v10.00h-4.00z"/></svg><div class="h2" style="top:48.93px">KeepLeft Android Remix</div><div class="p" style="top:96.24px;left:14px">Classic street racing based game now</div><div class="p" style="top:115.24px;left:14px">for your Android device! Made with</div><div class="p" style="top:134.24px;left:14px">GameMaker 1.4</div></div><div class="card" style="left:20.0px;top:807.0px;width:336.0px;height:300.0px"><svg class="db" width="336" height="300" viewBox="0 0 336 300"><path fill="#ff0a78" d="M0.00 0.00h10.00v4.00h-10.00zM0.00 296.00h10.00v4.00h-10.00zM21.43 0.00h12.00v4.00h-12.00zM21.43 296.00h12.00v4.00h-12.00zM44.86 0.00h12.00v4.00h-12.00zM44.86 296.00h12.00v4.00h-12.00zM68.29 0.00h12.00v4.00h-12.00zM68.29 296.00h12.00v4.00h-12.00zM91.71 0.00h12.00v4.00h-12.00zM91.71 296.00h12.00v4.00h-12.00zM115.14 0.00h12.00v4.00h-12.00zM115.14 296.00h12.00v4.00h-12.00zM138.57 0.00h12.00v4.00h-12.00zM138.57 296.00h12.00v4.00h-12.00zM162.00 0.00h12.00v4.00h-12.00zM162.00 296.00h12.00v4.00h-12.00zM185.43 0.00h12.00v4.00h-12.00zM185.43 296.00h12.00v4.00h-12.00zM208.86 0.00h12.00v4.00h-12.00zM208.86 296.00h12.00v4.00h-12.00zM232.29 0.00h12.00v4.00h-12.00zM232.29 296.00h12.00v4.00h-12.00zM255.71 0.00h12.00v4.00h-12.00zM255.71 296.00h12.00v4.00h-12.00zM279.14 0.00h12.00v4.00h-12.00zM279.14 296.00h12.00v4.00h-12.00zM302.57 0.00h12.00v4.00h-12.00zM302.57 296.00h12.00v4.00h-12.00zM326.00 0.00h10.00v4.00h-10.00zM326.00 296.00h10.00v4.00h-10.00zM0.00 0.00h4.00v10.00h-4.00zM332.00 0.00h4.00v10.00h-4.00zM0.00 20.46h4.00v12.00h-4.00zM332.00 20.46h4.00v12.00h-4.00zM0.00 42.92h4.00v12.00h-4.00zM332.00 42.92h4.00v12.00h-4.00zM0.00 65.38h4.00v12.00h-4.00zM332.00 65.38h4.00v12.00h-4.00zM0.00 87.85h4.00v12.00h-4.00zM332.00 87.85h4.00v12.00h-4.00zM0.00 110.31h4.00v12.00h-4.00zM332.00 110.31h4.00v12.00h-4.00zM0.00 132.77h4.00v12.00h-4.00zM332.00 132.77h4.00v12.00h-4.00zM0.00 155.23h4.00v12.00h-4.00zM332.00 155.23h4.00v12.00h-4.00zM0.00 177.69h4.00v12.00h-4.00zM332.00 177.69h4.00v12.00h-4.00zM0.00 200.15h4.00v12.00h-4.00zM332.00 200.15h4.00v12.00h-4.00zM0.00 222.62h4.00v12.00h-4.00zM332.00 222.62h4.00v12.00h-4.00zM0.00 245.08h4.00v12.00h-4.00zM332.00 245.08h4.00v12.00h-4.00zM0.00 267.54h4.00v12.00h-4.00zM332.00 267.54h4.00v12.00h-4.00zM0.00 290.00h4.00v10.00h-4.00zM332.00 290.00h4.00v10.00h-4.00z"/></svg><div class="h2" style="top:46.93px">pSync</div><div class="p" style="top:92.24px;left:14px">Written in Python, looks for changes</div></div><div class="card" style="left:371.0px;top:807.0px;width:336.0px;height:300.0px"><svg class="db" width="336" height="300" viewBox="0 0 336 300"><path fill="#ff0a78" d="M0.00 0.00h10.00v4.00h-10.00zM0.00 296.00h10.00v4.00h-10.00zM21.43 0.00h12.00v4.00h-12.00zM21.43 296.00h12.00v4.00h-12.00zM44.86 0.00h12.00v4.00h-12.00zM44.86 296.00h12.00v4.00h-12.00zM68.29 0.00h12.00v4.00h-12.00zM68.29 296.00h12.00v4.00h-12.00zM91.71 0.00h12.00v4.00h-12.00zM91.71 296.00h12.00v4.00h-12.00zM115.14 0.00h12.00v4.00h-12.00zM115.14 296.00h12.00v4.00h-12.00zM138.57 0.00h12.00v4.00h-12.00zM138.57 296.00h12.00v4.00h-12.00zM162.00 0.00h12.00v4.00h-12.00zM162.00 296.00h12.00v4.00h-12.00zM185.43 0.00h12.00v4.00h-12.00zM185.43 296.00h12.00v4.00h-12.00zM208.86 0.00h12.00v4.00h-12.00zM208.86 296.00h12.00v4.00h-12.00zM232.29 0.00h12.00v4.00h-12.00zM232.29 296.00h12.00v4.00h-12.00zM255.71 0.00h12.00v4.00h-12.00zM255.71 296.00h12.00v4.00h-12.00zM279.14 0.00h12.00v4.00h-12.00zM279.14 296.00h12.00v4.00h-12.00zM302.57 0.00h12.00v4.00h-12.00zM302.57 296.00h12.00v4.00h-12.00zM326.00 0.00h10.00v4.00h-10.00zM326.00 296.00h10.00v4.00h-10.00zM0.00 0.00h4.00v10.00h-4.00zM332.00 0.00h4.00v10.00h-4.00zM0.00 20.46h4.00v12.00h-4.00zM332.00 20.46h4.00v12.00h-4.00zM0.00 42.92h4.00v12.00h-4.00zM332.00 42.92h4.00v12.00h-4.00zM0.00 65.38h4.00v12.00h-4.00zM332.00 65.38h4.00v12.00h-4.00zM0.00 87.85h4.00v12.00h-4.00zM332.00 87.85h4.00v12.00h-4.00zM0.00 110.31h4.00v12.00h-4.00zM332.00 110.31h4.00v12.00h-4.00zM0.00 132.77h4.00v12.00h-4.00zM332.00 132.77h4.00v12.00h-4.00zM0.00 155.23h4.00v12.00h-4.00zM332.00 155.23h4.00v12.00h-4.00zM0.00 177.69h4.00v12.00h-4.00zM332.00 177.69h4.00v12.00h-4.00zM0.00 200.15h4.00v12.00h-4.00zM332.00 200.15h4.00v12.00h-4.00zM0.00 222.62h4.00v12.00h-4.00zM332.00 222.62h4.00v12.00h-4.00zM0.00 245.08h4.00v12.00h-4.00zM332.00 245.08h4.00v12.00h-4.00zM0.00 267.54h4.00v12.00h-4.00zM332.00 267.54h4.00v12.00h-4.00zM0.00 290.00h4.00v10.00h-4.00zM332.00 290.00h4.00v10.00h-4.00z"/></svg><div class="h2" style="top:46.93px">MySQL&lt;-&gt;PHP&lt;-&gt;Java</div><div class="p" style="top:92.24px;left:14px">Ever wanted to connect to your</div></div><div class="abs" style="left:775px;top:0;width:29px;height:1011px;background:#000"></div><div class="abs" style="left:804px;top:0;width:21px;height:1011px;background:#2b2b2b"></div><div class="abs" style="left:808px;top:40px;width:17px;height:780px;background:#7a7a7a"></div></div><div class="abs" style="left:0;top:0;width:825px;height:1011px;"></div></div><div class="abs" style="left:606.4px;top:421px;width:15.9px;height:28.6px;background:#2a2a2a;overflow:hidden"><div class="abs" style="left:0;top:0;width:15.9px;height:2.5px;background:#161616"></div><div class="abs" style="left:0.5px;top:4.6px;width:6.8px;height:19px;background:#262540;box-shadow:0 0 0 0.3px #5a2050"></div><div class="abs" style="left:8px;top:4.6px;width:7px;height:19px;background:#262540;box-shadow:0 0 0 0.3px #5a2050"></div><div class="abs" style="left:0.5px;top:24.4px;width:6.8px;height:5px;background:#262540"></div><div class="abs" style="left:8px;top:24.4px;width:7px;height:5px;background:#262540"></div><svg class="abs" style="left:0.8px;top:8.5px" width="6.5" height="14" viewBox="78 255 212 282" preserveAspectRatio="none"><use href="#cartoon"/></svg><div class="abs" style="left:8.3px;top:10.2px;width:6.1px;height:11px;background:#141414"></div></div><div class="tabstrip"></div><div class="seltab"></div><div class="toolbar"></div><div class="abs" style="left:4px;top:3px;width:16px;height:16px;background:linear-gradient(90deg,#320a0c 0%,#1c0a0a 35%,#0c0a0a 70%,#080808 100%);border-radius:2px"></div><div class="abs" style="left:8px;top:8px;width:6px;height:10px;background:#1c1412;border-radius:3px"></div><div class="abs" style="left:26px;top:3px;font:bold 11.6px/16px 'Liberation Sans',sans-serif;color:#fff;white-space:pre">Adam's projects</div><svg class="abs" style="left:230px;top:4px" width="16" height="14" viewBox="0 0 16 14"><path d="M4.5 4L11.5 10.5M11.5 4L4.5 10.5" stroke="#b0b0b0" stroke-width="1.6"/></svg><svg class="abs" style="left:256px;top:3px" width="17" height="17" viewBox="0 0 17 17"><path d="M8.5 2.5V14.5M2.5 8.5H14.5" stroke="#d0d0d0" stroke-width="1.3"/></svg><div class="abs" style="left:715px;top:9px;width:11px;height:1px;background:#c8c8c8"></div><div class="abs" style="left:758px;top:5px;width:10px;height:10px;border:1px solid #c8c8c8"></div><svg class="abs" style="left:798px;top:3px" width="14" height="14" viewBox="0 0 14 14"><path d="M2 2L12.5 12.5M12.5 2L2 12.5" stroke="#c8c8c8" stroke-width="1.1"/></svg><div class="abs" style="left:68px;top:29px;width:513px;height:24px;background:#1c1c1c;border:1px solid #0a0a0a"></div><svg class="abs" style="left:9px;top:31px" width="20" height="19" viewBox="0 0 20 19"><path d="M10 2L18.3 10.3H15.3V17.3H11.5V12.8H8.5V17.3H4.7V10.3H1.7Z" fill="#a6a6a6" stroke="#0a0a0a" stroke-width="1.2" stroke-linejoin="round"/></svg><div class="abs" style="left:43px;top:26px;width:29.5px;height:29.5px;border-radius:50%;background:#2b2b2b;border:1.3px solid #0d0d0d"></div><svg class="abs" style="left:48px;top:31px" width="18" height="20" viewBox="0 0 18 20"><path d="M2.4 9.9L14 2.6V17.2Z" fill="#b4b4b4"/></svg><svg class="abs" style="left:75px;top:33px" width="16" height="16" viewBox="0 0 16 16"><circle cx="7.9" cy="7.9" r="6.6" fill="none" stroke="#4a4a4a" stroke-width="1"/><rect x="7.1" y="6.6" width="1.6" height="5" fill="#4a4a4a"/><circle cx="7.9" cy="4.6" r="0.9" fill="#4a4a4a"/></svg><div class="abs" style="left:97px;top:33px;font:12px/16px 'Liberation Sans',sans-serif;color:#e6e6e6;white-space:pre;letter-spacing:0.09px">trapped inside web factory. send help.</div><svg class="abs" style="left:546px;top:38px" width="11" height="7" viewBox="0 0 11 7"><path d="M1 0.5H10L5.5 6Z" fill="#a6a6a6"/></svg><svg class="abs" style="left:561px;top:33px" width="16" height="16" viewBox="0 0 16 16"><path d="M12.6 8.6A5 5 0 1 1 10.8 4" fill="none" stroke="#a6a6a6" stroke-width="2.4"/><path d="M13.5 1.5V7.5H7.5Z" fill="#a6a6a6"/></svg><svg class="abs" style="left:595px;top:33px" width="16" height="16" viewBox="0 0 16 16"><path d="M8 1.2L10 5.8L15 6.2L11.2 9.5L12.4 14.5L8 11.8L3.6 14.5L4.8 9.5L1 6.2L6 5.8Z" fill="#a6a6a6" stroke="#0a0a0a" stroke-width="1" stroke-linejoin="round"/></svg><div class="abs" style="left:618px;top:33px;width:1px;height:15px;background:#555"></div><svg class="abs" style="left:625px;top:31px" width="17" height="18" viewBox="0 0 17 18"><path d="M2 5H6L8.5 2L11 5H15V16.5H2Z" fill="#a6a6a6" stroke="#0a0a0a" stroke-width="1.1" stroke-linejoin="round"/><path d="M4 8H5.3M7 8H13M4 10.5H5.3M7 10.5H13M4 13H5.3M7 13H13" stroke="#0a0a0a" stroke-width="1.3"/></svg><svg class="abs" style="left:661px;top:32px" width="18" height="19" viewBox="0 0 18 19"><path d="M6.5 2H11.5V9H16L9 17L2 9H6.5Z" fill="#707070"/></svg><svg class="abs" style="left:700px;top:34px" width="16" height="15" viewBox="0 0 16 15"><path d="M1.2 1.5H14.8V7A6.8 6.8 0 0 1 1.2 7Z" fill="#a6a6a6" stroke="#0a0a0a" stroke-width="0.8"/><path d="M4.5 5.5L8 8.5L11.5 5.5" fill="none" stroke="#fff" stroke-width="1.5"/><path d="M3 10.5A6 5 0 0 0 13 10.5" fill="none" stroke="#eee" stroke-width="1"/></svg><div class="abs" style="left:723px;top:33px;width:1px;height:15px;background:#555"></div><svg class="abs" style="left:729px;top:38px" width="9" height="6" viewBox="0 0 9 6"><path d="M0.8 0.8H8.3L4.5 4.8Z" fill="#a6a6a6"/></svg><svg class="abs" style="left:757px;top:32px" width="16" height="18" viewBox="0 0 16 18"><path d="M8 1L14.8 3V9.5C14.8 13 11 16 8 17C5 16 1.2 13 1.2 9.5V3Z" fill="#8e8e8e"/><path d="M4.2 6.2V10C4.2 11.8 7.2 11.8 7.2 10V6.2" fill="none" stroke="#fff" stroke-width="1.4"/><path d="M8.2 6.2H9.6A2.5 2.5 0 0 1 9.6 11.4H8.2Z" fill="none" stroke="#fff" stroke-width="1.4"/></svg><svg class="abs" style="left:796px;top:34px" width="17" height="14" viewBox="0 0 17 14"><path d="M1.5 3H15.5M1.5 7H15.5M1.5 11H15.5" stroke="#0a0a0a" stroke-width="3.2" stroke-linecap="round"/><path d="M2 3H15M2 7H15M2 11H15" stroke="#bdbdbd" stroke-width="1.8"/></svg>
<div class="abs" style="left:813px;top:59px;width:12px;height:759px;background:#2b2b2b"></div>
<div class="abs" style="left:814px;top:72.6px;width:10px;height:141px;background:#6b6b6b;border:1px solid #777"></div>
</body></html>
